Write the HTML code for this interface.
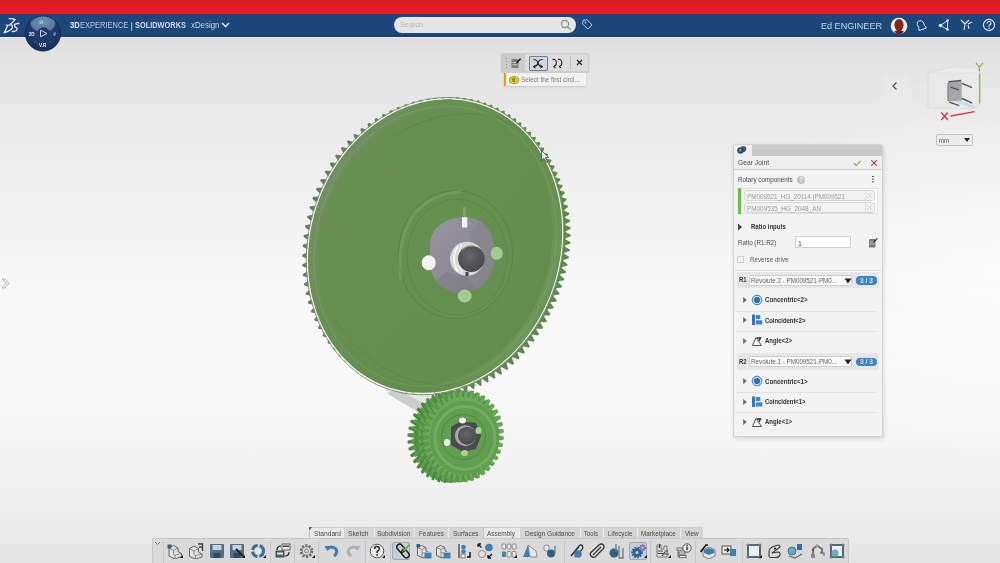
<!DOCTYPE html>
<html><head><meta charset="utf-8">
<style>
*{margin:0;padding:0;box-sizing:border-box}
html,body{width:1000px;height:563px;overflow:hidden}
body{font-family:"Liberation Sans",sans-serif;position:relative;background:linear-gradient(180deg,#c8202e 0,#e31d25 3px,#e31d25 14px,#1d477b 14px,#1d477b 37px,#e8e8e8 37px,#e4e4e4 563px)}
.abs{position:absolute}
#bgg{left:0;top:37px;width:1000px;height:526px;background:linear-gradient(180deg,#e6e8ea 0px,#dfdfdf 2px,#e3e3e3 20px,#e7e7e7 60px,#f0f0f0 150px,#f7f7f7 240px,#f9f9f9 330px,#f6f6f6 400px,#eeeeee 470px,#e4e4e4 526px)}
#redbar{left:0;top:0;width:1000px;height:14px;background:#e31d25;border-top:1px solid #c9232f}
#hdr{left:0;top:14px;width:1000px;height:22px;background:#1d477b;border-bottom:1px solid #143b68}
.brand{left:70px;top:20px;font-size:8.6px;line-height:10px;color:#d8e2ee;letter-spacing:-0.62px;white-space:nowrap}
.brand b{color:#e9eff6}
#search{left:394px;top:17px;width:182px;height:16px;border-radius:8px;background:#e6e6e6}
#search span{position:absolute;left:6px;top:4px;font-size:7px;color:#b8b8b8;line-height:8px}
.uname{left:821px;top:20px;font-size:9.8px;line-height:11px;color:#c3d3e6;letter-spacing:-0.45px;white-space:nowrap}
.t{position:absolute;white-space:nowrap;line-height:1}
</style></head><body><div id="wrap" style="position:absolute;left:0;top:0;width:1000px;height:563px;filter:blur(0.3px)">
<div id="bgg" class="abs"></div>
<div class="abs" style="left:600px;top:37px;width:400px;height:526px;background:radial-gradient(ellipse 260px 200px at 400px 230px,rgba(255,255,255,0.6),rgba(255,255,255,0))"></div>
<div id="redbar" class="abs"></div>
<div id="hdr" class="abs"></div>
<!-- 3DS logo -->
<svg class="abs" style="left:0;top:12px" width="24" height="26" viewBox="0 12 24 26">
<path d="M9.2 18.6 Q13 18.3 15 19.6 Q13 22 10.6 24" fill="none" stroke="#e6eef6" stroke-width="1.3" stroke-linecap="round"/>
<path d="M6.2 25.4 Q9 24.8 12 24.9" fill="none" stroke="#e6eef6" stroke-width="1.1" stroke-linecap="round"/>
<path d="M7.3 26.5 L4.4 32.5 Q8.5 31.5 11.4 29.2 Q12.6 27.8 12.3 26" fill="none" stroke="#e6eef6" stroke-width="1.3" stroke-linecap="round"/>
<path d="M18.9 23.5 Q15 23.4 14.2 25.2 Q14.5 27 16.8 28 Q18 29.5 15.5 31 Q13.8 31.7 12.3 31.4" fill="none" stroke="#e6eef6" stroke-width="1.3" stroke-linecap="round"/>
</svg>
<!-- compass -->
<svg class="abs" style="left:24px;top:14px" width="38" height="39" viewBox="0 0 38 39">
<defs><radialGradient id="cmp" cx="0.5" cy="0.35" r="0.65"><stop offset="0" stop-color="#25497a"/><stop offset="1" stop-color="#14305a"/></radialGradient>
<clipPath id="cc"><circle cx="19" cy="19.5" r="17"/></clipPath>
<radialGradient id="dome" cx="0.5" cy="0.4" r="0.6"><stop offset="0" stop-color="#6f8fb6"/><stop offset="0.8" stop-color="#5a7ba4"/><stop offset="1" stop-color="#4a6b96"/></radialGradient></defs>
<circle cx="19" cy="19.5" r="17.6" fill="url(#cmp)" stroke="#0f2a50" stroke-width="0.8"/>
<ellipse cx="19" cy="9.3" rx="12.3" ry="9" fill="url(#dome)" clip-path="url(#cc)"/>
<circle cx="19.5" cy="19.5" r="6.3" fill="#1b3a66"/>
<path d="M16.5 16.2 L23 19.5 L16.5 22.8 Z" fill="none" stroke="#c9d6e6" stroke-width="1"/>
<path d="M10 29 L12 27 M28 29 L26 27" stroke="#6d87a8" stroke-width="0.6"/>
<text x="4.8" y="22" font-size="4.6" fill="#e6edf5" font-weight="bold" font-family="Liberation Sans">3D</text>
<text x="15" y="33" font-size="4.6" fill="#e6edf5" font-weight="bold" font-family="Liberation Sans">V.R</text>
<text x="29.5" y="22" font-size="5" fill="#d8e2ee" font-family="Liberation Sans">i/</text>
<text x="15.5" y="9.5" font-size="4.6" fill="#e0e8f0" font-family="Liberation Sans">i/i</text>
</svg>
<svg class="abs" style="left:221px;top:22px" width="9" height="6" viewBox="0 0 9 6"><path d="M1 1 L4.5 4.5 L8 1" fill="none" stroke="#e6edf5" stroke-width="1.5"/></svg>
<div id="search" class="abs">
<svg style="position:absolute;left:166px;top:2px" width="12" height="12" viewBox="0 0 12 12"><circle cx="5" cy="5" r="3.6" fill="none" stroke="#8a8a8a" stroke-width="1.1"/><path d="M7.6 7.6 L10.5 10.5" stroke="#8a8a8a" stroke-width="1.3"/></svg>
</div>
<svg class="abs" style="left:581px;top:18px" width="12" height="13" viewBox="0 0 12 13"><path d="M2 2.5 L6 1.5 L11 7 L7 11 L1.5 6 Z" fill="none" stroke="#b3c9e2" stroke-width="1"/><circle cx="4.5" cy="4.5" r="0.9" fill="#b3c9e2"/></svg>
<svg class="abs" style="left:889px;top:16px" width="20" height="20" viewBox="0 0 20 20"><circle cx="10" cy="10" r="8.3" fill="#f4eeea"/><ellipse cx="10" cy="9" rx="4.6" ry="6" fill="#832818"/><path d="M5 15.5 Q10 12.5 15 15.5 Q13 18.2 10 18.2 Q7 18.2 5 15.5Z" fill="#6e2214"/></svg>
<svg class="abs" style="left:914px;top:18px" width="14" height="14" viewBox="0 0 14 14"><path d="M4.5 3 Q7.5 1.5 9.5 4.5 L10.5 7.5 L12.5 10 L5 12.5 L4.8 9.5 L3.2 6.5 Q2.8 4 4.5 3Z" fill="none" stroke="#dfe7f0" stroke-width="1"/></svg>
<svg class="abs" style="left:937px;top:18px" width="14" height="14" viewBox="0 0 14 14"><path d="M10.5 2.5 L3.5 7.5 L10.5 11.5 Z" fill="none" stroke="#dfe7f0" stroke-width="1"/><circle cx="3.5" cy="7.5" r="1.8" fill="#e2e9f1"/><circle cx="10.5" cy="2.5" r="1.3" fill="#e2e9f1"/><circle cx="10.5" cy="11.5" r="1.3" fill="#e2e9f1"/></svg>
<svg class="abs" style="left:959px;top:18px" width="14" height="14" viewBox="0 0 14 14"><path d="M2 2 L6 6 L5 12 M10 2 L6 6 M9 6 L13 4 M9 7 L10 11" fill="none" stroke="#e2e9f1" stroke-width="1.1"/></svg>
<svg class="abs" style="left:982px;top:18px" width="14" height="14" viewBox="0 0 14 14"><circle cx="7" cy="7" r="5.6" fill="none" stroke="#e2e9f1" stroke-width="1.1"/><path d="M5 5.5 Q5 3.5 7 3.5 Q9 3.5 9 5.3 Q9 6.5 7.2 7.3 L7 8.8" fill="none" stroke="#e2e9f1" stroke-width="1.1"/><circle cx="7" cy="10.5" r="0.7" fill="#e2e9f1"/></svg>
<svg class="abs" style="left:0;top:0" width="1000" height="563" viewBox="0 0 1000 563">
<defs>
<linearGradient id="gface" x1="0" y1="0" x2="1" y2="1">
<stop offset="0" stop-color="#6b9155"/><stop offset="0.45" stop-color="#678f50"/><stop offset="1" stop-color="#618b4c"/></linearGradient>
<linearGradient id="gteeth" x1="0" y1="0" x2="1" y2="0">
<stop offset="0" stop-color="#6c7866"/><stop offset="0.5" stop-color="#687f5e"/><stop offset="1" stop-color="#5c8a4b"/></linearGradient>
<linearGradient id="band" x1="0" y1="0.2" x2="1" y2="0.8">
<stop offset="0" stop-color="#768c6c" stop-opacity="0.9"/><stop offset="0.25" stop-color="#6f8f62" stop-opacity="0.3"/><stop offset="0.6" stop-color="#6f8f62" stop-opacity="0"/><stop offset="1" stop-color="#7fae6a" stop-opacity="0.5"/></linearGradient>
<linearGradient id="hubg" x1="0" y1="0" x2="1" y2="1">
<stop offset="0" stop-color="#9794a0"/><stop offset="0.6" stop-color="#8c8994"/><stop offset="1" stop-color="#7d7b84"/></linearGradient>
<radialGradient id="shaft" cx="0.45" cy="0.4" r="0.6"><stop offset="0" stop-color="#66656a"/><stop offset="1" stop-color="#4a494d"/></radialGradient>
</defs>
<path d="M382 384 L412 384 L432 396 L418 412 L388 394 Z" fill="#e6e6e6"/>
<path d="M388 394 L418 412 L425 404 L395 388Z" fill="#cdcdcd"/>
<path d="M482.4 435.8 L482.4 436.4 L488.5 437.7 L488.3 440.6 L482.1 441.3 L482.0 441.9 L481.9 442.5 L487.7 444.9 L487.1 447.7 L480.9 447.3 L480.7 447.9 L480.6 448.5 L485.9 451.9 L484.9 454.6 L478.9 453.1 L478.7 453.7 L478.4 454.2 L483.2 458.5 L481.9 461.1 L476.2 458.5 L475.9 459.0 L475.5 459.5 L479.6 464.6 L478.0 466.9 L472.7 463.3 L472.3 463.8 L472.0 464.2 L475.3 470.1 L473.3 472.0 L468.7 467.6 L468.2 467.9 L467.8 468.3 L470.2 474.7 L468.1 476.3 L464.1 471.0 L463.6 471.3 L463.1 471.6 L464.7 478.4 L462.3 479.6 L459.2 473.6 L458.6 473.8 L458.1 474.0 L458.7 481.0 L456.2 481.8 L453.9 475.3 L453.4 475.5 L452.9 475.6 L452.4 482.6 L449.9 482.9 L448.5 476.1 L448.0 476.2 L447.5 476.2 L446.1 483.1 L443.6 482.9 L443.1 475.9 L442.6 475.9 L442.1 475.8 L439.8 482.4 L437.3 481.8 L437.9 474.8 L437.4 474.6 L436.8 474.5 L433.7 480.6 L431.3 479.6 L432.9 472.7 L432.4 472.5 L431.9 472.2 L427.9 477.8 L425.8 476.3 L428.2 469.8 L427.8 469.4 L427.3 469.1 L422.7 473.9 L420.7 472.1 L424.0 466.0 L423.7 465.6 L423.3 465.2 L418.0 469.1 L416.4 467.0 L420.5 461.5 L420.1 461.1 L419.8 460.6 L414.1 463.6 L412.8 461.1 L417.6 456.5 L417.3 455.9 L417.1 455.4 L411.1 457.3 L410.1 454.7 L415.4 450.9 L415.3 450.3 L415.1 449.8 L408.9 450.6 L408.3 447.8 L414.1 445.0 L414.0 444.4 L413.9 443.8 L407.7 443.6 L407.5 440.7 L413.6 438.9 L413.6 438.3 L413.6 437.7 L407.5 436.4 L407.7 433.5 L413.9 432.8 L414.0 432.2 L414.1 431.6 L408.3 429.2 L408.9 426.4 L415.1 426.8 L415.3 426.2 L415.4 425.6 L410.1 422.2 L411.1 419.5 L417.1 421.0 L417.3 420.4 L417.6 419.9 L412.8 415.6 L414.1 413.0 L419.8 415.6 L420.1 415.1 L420.5 414.6 L416.4 409.5 L418.0 407.2 L423.3 410.8 L423.7 410.3 L424.0 409.9 L420.7 404.0 L422.7 402.1 L427.3 406.5 L427.8 406.2 L428.2 405.8 L425.8 399.4 L427.9 397.8 L431.9 403.1 L432.4 402.8 L432.9 402.5 L431.3 395.7 L433.7 394.5 L436.8 400.5 L437.4 400.3 L437.9 400.1 L437.3 393.1 L439.8 392.3 L442.1 398.8 L442.6 398.6 L443.1 398.5 L443.6 391.5 L446.1 391.2 L447.5 398.0 L448.0 397.9 L448.5 397.9 L449.9 391.0 L452.4 391.2 L452.9 398.2 L453.4 398.2 L453.9 398.3 L456.2 391.7 L458.7 392.3 L458.1 399.3 L458.6 399.5 L459.2 399.6 L462.3 393.5 L464.7 394.5 L463.1 401.4 L463.6 401.6 L464.1 401.9 L468.1 396.3 L470.2 397.8 L467.8 404.3 L468.2 404.7 L468.7 405.0 L473.3 400.2 L475.3 402.0 L472.0 408.1 L472.3 408.5 L472.7 408.9 L478.0 405.0 L479.6 407.1 L475.5 412.6 L475.9 413.0 L476.2 413.5 L481.9 410.5 L483.2 413.0 L478.4 417.6 L478.7 418.2 L478.9 418.7 L484.9 416.8 L485.9 419.4 L480.6 423.2 L480.7 423.8 L480.9 424.3 L487.1 423.5 L487.7 426.3 L481.9 429.1 L482.0 429.7 L482.1 430.3 L488.3 430.5 L488.5 433.4 L482.4 435.2Z" fill="#4d883f"/><path d="M485.9 435.5 L485.9 436.1 L492.0 437.5 L491.8 440.4 L485.6 441.1 L485.5 441.7 L485.4 442.3 L491.2 444.7 L490.6 447.5 L484.4 447.1 L484.2 447.7 L484.1 448.3 L489.4 451.7 L488.4 454.4 L482.4 452.9 L482.2 453.4 L481.9 454.0 L486.7 458.3 L485.4 460.8 L479.7 458.2 L479.4 458.8 L479.0 459.3 L483.1 464.4 L481.5 466.7 L476.2 463.1 L475.8 463.6 L475.5 464.0 L478.8 469.8 L476.8 471.8 L472.2 467.3 L471.7 467.7 L471.3 468.1 L473.7 474.4 L471.6 476.0 L467.6 470.8 L467.1 471.1 L466.6 471.4 L468.2 478.1 L465.8 479.3 L462.7 473.4 L462.1 473.6 L461.6 473.8 L462.2 480.8 L459.7 481.5 L457.4 475.1 L456.9 475.2 L456.4 475.3 L455.9 482.4 L453.4 482.7 L452.0 475.9 L451.5 475.9 L451.0 475.9 L449.6 482.8 L447.1 482.7 L446.6 475.7 L446.1 475.6 L445.6 475.5 L443.3 482.2 L440.8 481.6 L441.4 474.6 L440.9 474.4 L440.3 474.2 L437.2 480.4 L434.8 479.3 L436.4 472.5 L435.9 472.2 L435.4 472.0 L431.4 477.5 L429.3 476.1 L431.7 469.5 L431.3 469.2 L430.8 468.8 L426.2 473.6 L424.2 471.8 L427.5 465.8 L427.2 465.4 L426.8 464.9 L421.5 468.9 L419.9 466.7 L424.0 461.3 L423.6 460.8 L423.3 460.3 L417.6 463.3 L416.3 460.9 L421.1 456.2 L420.8 455.7 L420.6 455.2 L414.6 457.1 L413.6 454.5 L418.9 450.7 L418.8 450.1 L418.6 449.5 L412.4 450.4 L411.8 447.6 L417.6 444.8 L417.5 444.2 L417.4 443.6 L411.2 443.3 L411.0 440.5 L417.1 438.7 L417.1 438.1 L417.1 437.5 L411.0 436.1 L411.2 433.2 L417.4 432.6 L417.5 431.9 L417.6 431.3 L411.8 428.9 L412.4 426.1 L418.6 426.5 L418.8 425.9 L418.9 425.3 L413.6 421.9 L414.6 419.2 L420.6 420.7 L420.8 420.2 L421.1 419.6 L416.3 415.3 L417.6 412.8 L423.3 415.4 L423.6 414.9 L424.0 414.3 L419.9 409.2 L421.5 407.0 L426.8 410.5 L427.2 410.1 L427.5 409.6 L424.2 403.8 L426.2 401.8 L430.8 406.3 L431.3 405.9 L431.7 405.5 L429.3 399.2 L431.4 397.6 L435.4 402.8 L435.9 402.5 L436.4 402.3 L434.8 395.5 L437.2 394.3 L440.3 400.2 L440.9 400.0 L441.4 399.8 L440.8 392.8 L443.3 392.1 L445.6 398.5 L446.1 398.4 L446.6 398.3 L447.1 391.2 L449.6 390.9 L451.0 397.7 L451.5 397.7 L452.0 397.7 L453.4 390.8 L455.9 390.9 L456.4 397.9 L456.9 398.0 L457.4 398.1 L459.7 391.5 L462.2 392.0 L461.6 399.1 L462.1 399.2 L462.7 399.4 L465.8 393.2 L468.2 394.3 L466.6 401.1 L467.1 401.4 L467.6 401.7 L471.6 396.1 L473.7 397.5 L471.3 404.1 L471.7 404.4 L472.2 404.8 L476.8 400.0 L478.8 401.8 L475.5 407.8 L475.8 408.3 L476.2 408.7 L481.5 404.7 L483.1 406.9 L479.0 412.3 L479.4 412.8 L479.7 413.3 L485.4 410.3 L486.7 412.7 L481.9 417.4 L482.2 417.9 L482.4 418.5 L488.4 416.5 L489.4 419.1 L484.1 422.9 L484.2 423.5 L484.4 424.1 L490.6 423.2 L491.2 426.0 L485.4 428.8 L485.5 429.4 L485.6 430.0 L491.8 430.3 L492.0 433.1 L485.9 434.9Z" fill="#5b9a4b"/><path d="M489.4 435.3 L489.4 435.9 L495.5 437.2 L495.3 440.1 L489.1 440.8 L489.0 441.4 L488.9 442.0 L494.7 444.4 L494.1 447.3 L487.9 446.8 L487.7 447.4 L487.6 448.0 L492.9 451.4 L491.9 454.1 L485.9 452.6 L485.7 453.2 L485.4 453.7 L490.2 458.0 L488.9 460.6 L483.2 458.0 L482.9 458.5 L482.5 459.0 L486.6 464.2 L485.0 466.4 L479.7 462.9 L479.3 463.3 L479.0 463.8 L482.3 469.6 L480.3 471.5 L475.7 467.1 L475.2 467.4 L474.8 467.8 L477.2 474.2 L475.1 475.8 L471.1 470.5 L470.6 470.8 L470.1 471.1 L471.7 477.9 L469.3 479.1 L466.2 473.1 L465.6 473.4 L465.1 473.6 L465.7 480.5 L463.2 481.3 L460.9 474.9 L460.4 475.0 L459.9 475.1 L459.4 482.1 L456.9 482.4 L455.5 475.6 L455.0 475.7 L454.5 475.7 L453.1 482.6 L450.6 482.4 L450.1 475.4 L449.6 475.4 L449.1 475.3 L446.8 481.9 L444.3 481.3 L444.9 474.3 L444.4 474.1 L443.8 474.0 L440.7 480.1 L438.3 479.1 L439.9 472.2 L439.4 472.0 L438.9 471.7 L434.9 477.3 L432.8 475.8 L435.2 469.3 L434.8 468.9 L434.3 468.6 L429.7 473.4 L427.7 471.6 L431.0 465.5 L430.7 465.1 L430.3 464.7 L425.0 468.6 L423.4 466.5 L427.5 461.1 L427.1 460.6 L426.8 460.1 L421.1 463.1 L419.8 460.7 L424.6 456.0 L424.3 455.4 L424.1 454.9 L418.1 456.9 L417.1 454.2 L422.4 450.4 L422.3 449.9 L422.1 449.3 L415.9 450.1 L415.3 447.4 L421.1 444.5 L421.0 443.9 L420.9 443.3 L414.7 443.1 L414.5 440.2 L420.6 438.4 L420.6 437.8 L420.6 437.2 L414.5 435.9 L414.7 433.0 L420.9 432.3 L421.0 431.7 L421.1 431.1 L415.3 428.7 L415.9 425.9 L422.1 426.3 L422.3 425.7 L422.4 425.1 L417.1 421.7 L418.1 419.0 L424.1 420.5 L424.3 419.9 L424.6 419.4 L419.8 415.1 L421.1 412.6 L426.8 415.1 L427.1 414.6 L427.5 414.1 L423.4 409.0 L425.0 406.7 L430.3 410.3 L430.7 409.8 L431.0 409.4 L427.7 403.5 L429.7 401.6 L434.3 406.1 L434.8 405.7 L435.2 405.3 L432.8 398.9 L434.9 397.3 L438.9 402.6 L439.4 402.3 L439.9 402.0 L438.3 395.3 L440.7 394.1 L443.8 400.0 L444.4 399.8 L444.9 399.6 L444.3 392.6 L446.8 391.8 L449.1 398.3 L449.6 398.1 L450.1 398.0 L450.6 391.0 L453.1 390.7 L454.5 397.5 L455.0 397.5 L455.5 397.4 L456.9 390.5 L459.4 390.7 L459.9 397.7 L460.4 397.7 L460.9 397.8 L463.2 391.2 L465.7 391.8 L465.1 398.8 L465.6 399.0 L466.2 399.2 L469.3 393.0 L471.7 394.0 L470.1 400.9 L470.6 401.1 L471.1 401.4 L475.1 395.9 L477.2 397.3 L474.8 403.8 L475.2 404.2 L475.7 404.5 L480.3 399.7 L482.3 401.5 L479.0 407.6 L479.3 408.0 L479.7 408.4 L485.0 404.5 L486.6 406.6 L482.5 412.1 L482.9 412.5 L483.2 413.0 L488.9 410.1 L490.2 412.5 L485.4 417.1 L485.7 417.7 L485.9 418.2 L491.9 416.3 L492.9 418.9 L487.6 422.7 L487.7 423.3 L487.9 423.8 L494.1 423.0 L494.7 425.8 L488.9 428.6 L489.0 429.2 L489.1 429.8 L495.3 430.0 L495.5 432.9 L489.4 434.7Z" fill="#4f8c41"/><path d="M492.9 435.0 L492.9 435.7 L499.0 437.0 L498.8 439.9 L492.6 440.6 L492.5 441.2 L492.4 441.8 L498.2 444.2 L497.6 447.0 L491.4 446.6 L491.2 447.2 L491.1 447.8 L496.4 451.2 L495.4 453.9 L489.4 452.4 L489.2 452.9 L488.9 453.5 L493.7 457.8 L492.4 460.3 L486.7 457.8 L486.4 458.3 L486.0 458.8 L490.1 463.9 L488.5 466.2 L483.2 462.6 L482.8 463.1 L482.5 463.5 L485.8 469.3 L483.8 471.3 L479.2 466.8 L478.7 467.2 L478.3 467.6 L480.7 473.9 L478.6 475.5 L474.6 470.3 L474.1 470.6 L473.6 470.9 L475.2 477.6 L472.8 478.8 L469.7 472.9 L469.1 473.1 L468.6 473.3 L469.2 480.3 L466.7 481.1 L464.4 474.6 L463.9 474.7 L463.4 474.8 L462.9 481.9 L460.4 482.2 L459.0 475.4 L458.5 475.4 L458.0 475.4 L456.6 482.3 L454.1 482.2 L453.6 475.2 L453.1 475.1 L452.6 475.1 L450.3 481.7 L447.8 481.1 L448.4 474.1 L447.9 473.9 L447.3 473.7 L444.2 479.9 L441.8 478.9 L443.4 472.0 L442.9 471.7 L442.4 471.5 L438.4 477.0 L436.3 475.6 L438.7 469.0 L438.3 468.7 L437.8 468.3 L433.2 473.2 L431.2 471.3 L434.5 465.3 L434.2 464.9 L433.8 464.4 L428.5 468.4 L426.9 466.2 L431.0 460.8 L430.6 460.3 L430.3 459.8 L424.6 462.8 L423.3 460.4 L428.1 455.7 L427.8 455.2 L427.6 454.7 L421.6 456.6 L420.6 454.0 L425.9 450.2 L425.8 449.6 L425.6 449.0 L419.4 449.9 L418.8 447.1 L424.6 444.3 L424.5 443.7 L424.4 443.1 L418.2 442.9 L418.0 440.0 L424.1 438.2 L424.1 437.6 L424.1 437.0 L418.0 435.6 L418.2 432.8 L424.4 432.1 L424.5 431.5 L424.6 430.8 L418.8 428.5 L419.4 425.6 L425.6 426.0 L425.8 425.4 L425.9 424.9 L420.6 421.5 L421.6 418.8 L427.6 420.3 L427.8 419.7 L428.1 419.1 L423.3 414.8 L424.6 412.3 L430.3 414.9 L430.6 414.4 L431.0 413.9 L426.9 408.7 L428.5 406.5 L433.8 410.0 L434.2 409.6 L434.5 409.1 L431.2 403.3 L433.2 401.4 L437.8 405.8 L438.3 405.4 L438.7 405.1 L436.3 398.7 L438.4 397.1 L442.4 402.4 L442.9 402.1 L443.4 401.8 L441.8 395.0 L444.2 393.8 L447.3 399.7 L447.9 399.5 L448.4 399.3 L447.8 392.3 L450.3 391.6 L452.6 398.0 L453.1 397.9 L453.6 397.8 L454.1 390.8 L456.6 390.4 L458.0 397.2 L458.5 397.2 L459.0 397.2 L460.4 390.3 L462.9 390.4 L463.4 397.4 L463.9 397.5 L464.4 397.6 L466.7 391.0 L469.2 391.5 L468.6 398.6 L469.1 398.7 L469.7 398.9 L472.8 392.8 L475.2 393.8 L473.6 400.6 L474.1 400.9 L474.6 401.2 L478.6 395.6 L480.7 397.0 L478.3 403.6 L478.7 403.9 L479.2 404.3 L483.8 399.5 L485.8 401.3 L482.5 407.3 L482.8 407.8 L483.2 408.2 L488.5 404.2 L490.1 406.4 L486.0 411.8 L486.4 412.3 L486.7 412.8 L492.4 409.8 L493.7 412.2 L488.9 416.9 L489.2 417.4 L489.4 418.0 L495.4 416.0 L496.4 418.7 L491.1 422.4 L491.2 423.0 L491.4 423.6 L497.6 422.7 L498.2 425.5 L492.4 428.3 L492.5 428.9 L492.6 429.5 L498.8 429.8 L499.0 432.6 L492.9 434.4Z" fill="#63a253"/><path d="M495.9 434.8 L495.9 435.4 L502.0 436.8 L501.8 439.7 L495.6 440.4 L495.5 441.0 L495.4 441.6 L501.2 444.0 L500.6 446.8 L494.4 446.4 L494.2 447.0 L494.1 447.6 L499.4 451.0 L498.4 453.7 L492.4 452.2 L492.2 452.7 L491.9 453.3 L496.7 457.6 L495.4 460.1 L489.7 457.5 L489.4 458.1 L489.0 458.6 L493.1 463.7 L491.5 466.0 L486.2 462.4 L485.8 462.9 L485.5 463.3 L488.8 469.1 L486.8 471.1 L482.2 466.6 L481.7 467.0 L481.3 467.4 L483.7 473.7 L481.6 475.3 L477.6 470.1 L477.1 470.4 L476.6 470.7 L478.2 477.4 L475.8 478.6 L472.7 472.7 L472.1 472.9 L471.6 473.1 L472.2 480.1 L469.7 480.8 L467.4 474.4 L466.9 474.5 L466.4 474.6 L465.9 481.7 L463.4 482.0 L462.0 475.2 L461.5 475.2 L461.0 475.2 L459.6 482.1 L457.1 482.0 L456.6 475.0 L456.1 474.9 L455.6 474.8 L453.3 481.5 L450.8 480.9 L451.4 473.9 L450.9 473.7 L450.3 473.5 L447.2 479.7 L444.8 478.6 L446.4 471.8 L445.9 471.5 L445.4 471.3 L441.4 476.8 L439.3 475.4 L441.7 468.8 L441.3 468.5 L440.8 468.1 L436.2 472.9 L434.2 471.1 L437.5 465.1 L437.2 464.7 L436.8 464.2 L431.5 468.2 L429.9 466.0 L434.0 460.6 L433.6 460.1 L433.3 459.6 L427.6 462.6 L426.3 460.2 L431.1 455.5 L430.8 455.0 L430.6 454.5 L424.6 456.4 L423.6 453.8 L428.9 450.0 L428.8 449.4 L428.6 448.8 L422.4 449.7 L421.8 446.9 L427.6 444.1 L427.5 443.5 L427.4 442.9 L421.2 442.6 L421.0 439.8 L427.1 438.0 L427.1 437.4 L427.1 436.8 L421.0 435.4 L421.2 432.5 L427.4 431.9 L427.5 431.2 L427.6 430.6 L421.8 428.2 L422.4 425.4 L428.6 425.8 L428.8 425.2 L428.9 424.6 L423.6 421.2 L424.6 418.5 L430.6 420.0 L430.8 419.5 L431.1 418.9 L426.3 414.6 L427.6 412.1 L433.3 414.7 L433.6 414.2 L434.0 413.6 L429.9 408.5 L431.5 406.3 L436.8 409.8 L437.2 409.4 L437.5 408.9 L434.2 403.1 L436.2 401.1 L440.8 405.6 L441.3 405.2 L441.7 404.8 L439.3 398.5 L441.4 396.9 L445.4 402.1 L445.9 401.8 L446.4 401.6 L444.8 394.8 L447.2 393.6 L450.3 399.5 L450.9 399.3 L451.4 399.1 L450.8 392.1 L453.3 391.4 L455.6 397.8 L456.1 397.7 L456.6 397.6 L457.1 390.5 L459.6 390.2 L461.0 397.0 L461.5 397.0 L462.0 397.0 L463.4 390.1 L465.9 390.2 L466.4 397.2 L466.9 397.3 L467.4 397.4 L469.7 390.8 L472.2 391.3 L471.6 398.4 L472.1 398.5 L472.7 398.7 L475.8 392.5 L478.2 393.6 L476.6 400.4 L477.1 400.7 L477.6 401.0 L481.6 395.4 L483.7 396.8 L481.3 403.4 L481.7 403.7 L482.2 404.1 L486.8 399.3 L488.8 401.1 L485.5 407.1 L485.8 407.6 L486.2 408.0 L491.5 404.0 L493.1 406.2 L489.0 411.6 L489.4 412.1 L489.7 412.6 L495.4 409.6 L496.7 412.0 L491.9 416.7 L492.2 417.2 L492.4 417.8 L498.4 415.8 L499.4 418.4 L494.1 422.2 L494.2 422.8 L494.4 423.4 L500.6 422.5 L501.2 425.3 L495.4 428.1 L495.5 428.7 L495.6 429.3 L501.8 429.6 L502.0 432.4 L495.9 434.2Z" fill="#54923f"/>
<path d="M497.4 434.7 L497.4 435.3 L503.5 436.7 L503.3 439.6 L497.1 440.2 L497.0 440.9 L496.9 441.5 L502.7 443.9 L502.1 446.7 L495.9 446.3 L495.7 446.9 L495.6 447.5 L500.9 450.9 L499.9 453.6 L493.9 452.1 L493.7 452.6 L493.4 453.2 L498.2 457.5 L496.9 460.0 L491.2 457.4 L490.9 458.0 L490.5 458.5 L494.6 463.6 L493.0 465.8 L487.7 462.3 L487.3 462.7 L487.0 463.2 L490.3 469.0 L488.3 471.0 L483.7 466.5 L483.2 466.9 L482.8 467.3 L485.2 473.6 L483.1 475.2 L479.1 470.0 L478.6 470.3 L478.1 470.6 L479.7 477.3 L477.3 478.5 L474.2 472.6 L473.6 472.8 L473.1 473.0 L473.7 480.0 L471.2 480.7 L468.9 474.3 L468.4 474.4 L467.9 474.5 L467.4 481.6 L464.9 481.9 L463.5 475.1 L463.0 475.1 L462.5 475.1 L461.1 482.0 L458.6 481.9 L458.1 474.9 L457.6 474.8 L457.1 474.7 L454.8 481.3 L452.3 480.8 L452.9 473.7 L452.4 473.6 L451.8 473.4 L448.7 479.6 L446.3 478.5 L447.9 471.7 L447.4 471.4 L446.9 471.2 L442.9 476.7 L440.8 475.3 L443.2 468.7 L442.8 468.4 L442.3 468.0 L437.7 472.8 L435.7 471.0 L439.0 465.0 L438.7 464.5 L438.3 464.1 L433.0 468.1 L431.4 465.9 L435.5 460.5 L435.1 460.0 L434.8 459.5 L429.1 462.5 L427.8 460.1 L432.6 455.4 L432.3 454.9 L432.1 454.3 L426.1 456.3 L425.1 453.7 L430.4 449.9 L430.3 449.3 L430.1 448.7 L423.9 449.6 L423.3 446.8 L429.1 444.0 L429.0 443.4 L428.9 442.8 L422.7 442.5 L422.5 439.7 L428.6 437.9 L428.6 437.3 L428.6 436.7 L422.5 435.3 L422.7 432.4 L428.9 431.8 L429.0 431.1 L429.1 430.5 L423.3 428.1 L423.9 425.3 L430.1 425.7 L430.3 425.1 L430.4 424.5 L425.1 421.1 L426.1 418.4 L432.1 419.9 L432.3 419.4 L432.6 418.8 L427.8 414.5 L429.1 412.0 L434.8 414.6 L435.1 414.0 L435.5 413.5 L431.4 408.4 L433.0 406.2 L438.3 409.7 L438.7 409.3 L439.0 408.8 L435.7 403.0 L437.7 401.0 L442.3 405.5 L442.8 405.1 L443.2 404.7 L440.8 398.4 L442.9 396.8 L446.9 402.0 L447.4 401.7 L447.9 401.4 L446.3 394.7 L448.7 393.5 L451.8 399.4 L452.4 399.2 L452.9 399.0 L452.3 392.0 L454.8 391.3 L457.1 397.7 L457.6 397.6 L458.1 397.5 L458.6 390.4 L461.1 390.1 L462.5 396.9 L463.0 396.9 L463.5 396.9 L464.9 390.0 L467.4 390.1 L467.9 397.1 L468.4 397.2 L468.9 397.3 L471.2 390.7 L473.7 391.2 L473.1 398.3 L473.6 398.4 L474.2 398.6 L477.3 392.4 L479.7 393.5 L478.1 400.3 L478.6 400.6 L479.1 400.8 L483.1 395.3 L485.2 396.7 L482.8 403.3 L483.2 403.6 L483.7 404.0 L488.3 399.2 L490.3 401.0 L487.0 407.0 L487.3 407.5 L487.7 407.9 L493.0 403.9 L494.6 406.1 L490.5 411.5 L490.9 412.0 L491.2 412.5 L496.9 409.5 L498.2 411.9 L493.4 416.6 L493.7 417.1 L493.9 417.7 L499.9 415.7 L500.9 418.3 L495.6 422.1 L495.7 422.7 L495.9 423.3 L502.1 422.4 L502.7 425.2 L496.9 428.0 L497.0 428.6 L497.1 429.2 L503.3 429.5 L503.5 432.3 L497.4 434.1Z" fill="#6aa85a" stroke="#4f8f40" stroke-width="0.5"/>
<ellipse cx="464.5" cy="438" rx="35" ry="37" fill="#619e4f"/>
<ellipse cx="465" cy="438" rx="30" ry="31.5" fill="none" stroke="#78b166" stroke-width="3" opacity="0.75"/>
<ellipse cx="463.5" cy="437" rx="22" ry="22.5" fill="none" stroke="#4c8c3e" stroke-width="1"/>
<path d="M451 427 L461 421 L476 423 L481 436 L476 449 L463 452 L451 445 Z" fill="#4a4a4f"/>
<circle cx="465.4" cy="435.7" r="10.5" fill="#a9a9a9"/>
<circle cx="467" cy="435.7" r="9" fill="url(#shaft)"/>
<ellipse cx="462.5" cy="420.5" rx="3.5" ry="3" fill="#f2f2f2"/>
<ellipse cx="478.5" cy="430.5" rx="3" ry="3.5" fill="#a9d295"/>
<ellipse cx="447" cy="442.5" rx="3" ry="3.5" fill="#f2f2f2"/>
<ellipse cx="464.5" cy="453" rx="3.5" ry="3" fill="#a9d295"/>
<path d="M565.7 231.8 L565.7 232.3 L570.8 234.7 L570.8 236.2 L565.6 238.3 L565.5 238.9 L565.5 239.5 L570.5 242.1 L570.4 243.5 L565.1 245.5 L565.1 246.1 L565.0 246.7 L569.8 249.4 L569.7 250.9 L564.4 252.7 L564.3 253.3 L564.3 253.8 L568.9 256.8 L568.7 258.3 L563.4 259.9 L563.3 260.4 L563.2 261.0 L567.6 264.2 L567.4 265.6 L562.1 267.0 L562.0 267.6 L561.8 268.2 L566.1 271.5 L565.7 273.0 L560.5 274.1 L560.3 274.7 L560.2 275.3 L564.2 278.8 L563.8 280.2 L558.6 281.2 L558.4 281.8 L558.2 282.4 L562.1 286.0 L561.6 287.5 L556.4 288.3 L556.2 288.8 L556.0 289.4 L559.6 293.2 L559.1 294.6 L553.9 295.2 L553.7 295.8 L553.4 296.3 L556.8 300.3 L556.2 301.7 L551.1 302.1 L550.8 302.6 L550.6 303.2 L553.8 307.2 L553.1 308.6 L548.0 308.9 L547.7 309.4 L547.5 309.9 L550.5 314.1 L549.8 315.5 L544.6 315.5 L544.3 316.0 L544.0 316.6 L546.9 320.9 L546.2 322.3 L540.9 322.0 L540.6 322.5 L540.3 323.0 L543.1 327.6 L542.3 328.9 L536.9 328.4 L536.6 328.9 L536.2 329.4 L539.0 334.1 L538.1 335.4 L532.6 334.5 L532.3 335.0 L531.9 335.5 L534.5 340.5 L533.6 341.7 L528.1 340.5 L527.7 341.0 L527.3 341.5 L529.8 346.6 L528.9 347.8 L523.3 346.3 L522.9 346.8 L522.5 347.2 L524.8 352.6 L523.8 353.7 L518.2 351.9 L517.8 352.3 L517.4 352.8 L519.5 358.3 L518.5 359.4 L512.9 357.2 L512.4 357.6 L512.0 358.0 L514.0 363.8 L512.8 364.8 L507.3 362.3 L506.8 362.7 L506.4 363.1 L508.2 369.0 L507.0 370.0 L501.4 367.1 L501.0 367.4 L500.5 367.8 L502.0 373.8 L500.7 374.7 L495.3 371.4 L494.8 371.8 L494.3 372.1 L495.4 378.0 L494.1 378.8 L489.0 375.5 L488.4 375.8 L487.9 376.1 L488.6 381.9 L487.2 382.6 L482.4 379.1 L481.9 379.4 L481.3 379.7 L481.6 385.4 L480.2 386.1 L475.7 382.4 L475.1 382.7 L474.6 382.9 L474.5 388.5 L473.1 389.1 L468.8 385.3 L468.2 385.5 L467.7 385.7 L467.1 390.9 L465.6 391.3 L461.7 387.5 L461.1 387.7 L460.5 387.8 L459.6 392.6 L458.1 392.9 L454.5 389.3 L453.9 389.4 L453.3 389.5 L452.0 393.9 L450.5 394.1 L447.2 390.6 L446.6 390.7 L446.0 390.7 L444.4 394.6 L442.9 394.7 L439.9 391.4 L439.3 391.5 L438.7 391.5 L436.8 394.9 L435.3 394.9 L432.6 391.9 L432.0 392.0 L431.4 392.0 L429.3 395.1 L427.8 395.1 L425.3 392.4 L424.7 392.4 L424.1 392.4 L421.8 394.9 L420.3 394.9 L418.0 392.3 L417.4 392.3 L416.8 392.2 L414.3 394.3 L412.8 394.1 L410.7 391.7 L410.1 391.7 L409.5 391.6 L406.9 393.1 L405.5 392.8 L403.4 390.7 L402.8 390.5 L402.3 390.4 L399.6 391.5 L398.2 391.1 L396.2 389.1 L395.6 388.9 L395.1 388.8 L392.4 389.5 L390.9 389.0 L389.1 387.0 L388.5 386.8 L388.0 386.6 L385.3 387.0 L383.8 386.4 L382.1 384.3 L381.5 384.1 L381.0 383.9 L378.3 383.9 L376.9 383.2 L375.2 381.2 L374.7 380.9 L374.1 380.6 L371.5 380.4 L370.1 379.6 L368.5 377.5 L368.0 377.2 L367.5 376.9 L364.8 376.5 L363.4 375.7 L362.1 373.3 L361.5 373.0 L361.0 372.6 L358.2 372.2 L356.9 371.3 L355.8 368.6 L355.3 368.2 L354.8 367.8 L351.9 367.4 L350.7 366.3 L349.9 363.4 L349.4 363.0 L348.9 362.5 L345.9 362.0 L344.7 360.9 L344.2 357.8 L343.8 357.3 L343.3 356.8 L339.9 356.4 L338.7 355.2 L338.9 351.6 L338.4 351.1 L338.0 350.6 L334.0 350.3 L332.9 349.1 L333.9 345.0 L333.5 344.5 L333.1 343.9 L328.5 343.8 L327.5 342.4 L329.3 338.0 L328.9 337.5 L328.6 336.9 L323.4 336.7 L322.4 335.2 L325.1 330.6 L324.8 330.0 L324.5 329.4 L318.8 329.1 L318.0 327.5 L321.3 322.9 L321.0 322.2 L320.8 321.6 L314.9 321.0 L314.2 319.3 L318.0 314.8 L317.8 314.1 L317.5 313.5 L311.4 312.5 L310.8 310.8 L315.2 306.4 L315.0 305.7 L314.8 305.0 L308.4 303.8 L307.9 302.0 L312.8 297.7 L312.6 297.0 L312.5 296.3 L306.1 294.7 L305.7 292.9 L311.0 288.8 L310.8 288.1 L310.7 287.4 L304.3 285.4 L304.0 283.5 L309.6 279.8 L309.5 279.0 L309.4 278.3 L303.1 275.9 L302.9 274.0 L308.8 270.5 L308.7 269.8 L308.7 269.0 L302.4 266.3 L302.4 264.3 L308.5 261.2 L308.5 260.4 L308.5 259.7 L302.3 256.6 L302.4 254.6 L308.7 251.8 L308.7 251.1 L308.8 250.3 L302.7 246.8 L302.9 244.8 L309.4 242.4 L309.5 241.6 L309.6 240.9 L303.6 237.0 L303.9 235.1 L310.7 233.0 L310.8 232.2 L311.0 231.5 L305.0 227.3 L305.4 225.3 L312.5 223.7 L312.7 222.9 L312.8 222.2 L307.0 217.6 L307.4 215.7 L314.8 214.4 L315.0 213.7 L315.2 213.0 L309.4 208.1 L310.0 206.2 L317.5 205.4 L317.8 204.6 L318.0 203.9 L312.4 198.7 L313.1 196.8 L320.8 196.5 L321.1 195.8 L321.3 195.1 L316.0 189.5 L316.8 187.7 L324.5 187.8 L324.8 187.1 L325.1 186.5 L320.2 180.7 L321.0 179.0 L328.6 179.4 L329.0 178.8 L329.3 178.1 L324.7 172.1 L325.7 170.5 L333.1 171.3 L333.5 170.7 L333.9 170.1 L329.7 163.9 L330.8 162.3 L338.1 163.5 L338.5 162.9 L338.9 162.3 L335.1 156.1 L336.2 154.5 L343.4 156.1 L343.8 155.6 L344.3 155.0 L340.9 148.6 L342.1 147.1 L349.0 149.1 L349.5 148.6 L349.9 148.0 L347.0 141.5 L348.2 140.2 L354.9 142.5 L355.4 142.0 L355.9 141.5 L353.5 135.1 L354.9 133.9 L361.1 136.3 L361.7 135.8 L362.2 135.4 L360.4 129.2 L361.8 128.1 L367.6 130.6 L368.1 130.1 L368.7 129.7 L367.5 123.8 L368.9 122.8 L374.3 125.3 L374.8 124.9 L375.4 124.5 L374.7 118.9 L376.2 118.0 L381.1 120.5 L381.7 120.2 L382.2 119.8 L382.1 114.6 L383.6 113.8 L388.1 116.2 L388.7 115.9 L389.3 115.6 L389.6 110.8 L391.1 110.1 L395.2 112.4 L395.8 112.1 L396.4 111.9 L397.1 107.3 L398.6 106.7 L402.5 109.1 L403.0 108.9 L403.6 108.7 L404.7 104.4 L406.2 103.9 L409.7 106.3 L410.3 106.1 L410.9 105.9 L412.2 102.0 L413.8 101.6 L417.0 104.0 L417.6 103.9 L418.2 103.7 L419.8 100.1 L421.3 99.8 L424.4 102.3 L424.9 102.1 L425.5 102.0 L427.4 98.8 L428.9 98.5 L431.7 101.0 L432.2 100.9 L432.8 100.8 L434.8 97.9 L436.3 97.8 L438.9 100.1 L439.5 100.1 L440.1 100.1 L442.2 97.3 L443.7 97.2 L446.1 99.7 L446.6 99.7 L447.2 99.6 L449.5 97.0 L451.0 97.0 L453.2 99.6 L453.7 99.7 L454.3 99.7 L456.8 97.1 L458.2 97.2 L460.2 100.1 L460.7 100.1 L461.3 100.2 L463.9 97.7 L465.3 97.9 L467.1 101.0 L467.6 101.1 L468.1 101.2 L470.9 98.8 L472.3 99.0 L473.8 102.3 L474.3 102.4 L474.9 102.5 L477.8 100.3 L479.2 100.6 L480.4 104.0 L480.9 104.2 L481.5 104.4 L484.5 102.2 L485.9 102.7 L486.8 106.2 L487.3 106.4 L487.9 106.6 L491.1 104.6 L492.3 105.2 L493.1 108.8 L493.6 109.0 L494.1 109.2 L497.4 107.4 L498.6 108.1 L499.1 111.7 L499.6 112.0 L500.0 112.3 L503.5 110.6 L504.7 111.3 L504.9 115.1 L505.4 115.3 L505.8 115.6 L509.4 114.2 L510.5 115.0 L510.5 118.7 L510.9 119.0 L511.4 119.3 L515.0 118.1 L516.1 118.9 L515.9 122.7 L516.3 123.0 L516.7 123.4 L520.4 122.3 L521.4 123.2 L521.0 127.0 L521.4 127.3 L521.8 127.7 L525.5 126.9 L526.5 127.8 L525.8 131.6 L526.2 131.9 L526.6 132.3 L530.4 131.7 L531.3 132.7 L530.4 136.4 L530.8 136.8 L531.1 137.2 L535.0 136.8 L535.9 137.8 L534.8 141.5 L535.1 141.9 L535.5 142.3 L539.4 142.1 L540.3 143.2 L538.9 146.8 L539.2 147.2 L539.5 147.7 L543.5 147.6 L544.3 148.8 L542.7 152.3 L543.0 152.8 L543.3 153.2 L547.3 153.4 L548.1 154.6 L546.3 158.1 L546.6 158.5 L546.8 159.0 L550.9 159.4 L551.5 160.6 L549.6 164.0 L549.8 164.5 L550.1 165.0 L554.1 165.5 L554.7 166.8 L552.5 170.2 L552.8 170.7 L553.0 171.2 L557.1 171.9 L557.7 173.1 L555.3 176.5 L555.5 177.0 L555.7 177.5 L559.9 178.4 L560.4 179.7 L557.7 182.9 L557.9 183.4 L558.0 183.9 L562.3 185.0 L562.8 186.3 L559.8 189.5 L560.0 190.0 L560.1 190.6 L564.4 191.8 L564.8 193.2 L561.6 196.2 L561.8 196.7 L561.9 197.3 L566.3 198.7 L566.6 200.1 L563.2 203.0 L563.3 203.6 L563.4 204.1 L567.8 205.7 L568.1 207.1 L564.3 210.0 L564.3 210.5 L564.4 211.1 L569.1 212.8 L569.3 214.3 L565.0 217.0 L565.1 217.6 L565.1 218.1 L570.0 220.1 L570.2 221.5 L565.5 224.1 L565.5 224.6 L565.6 225.2 L570.6 227.3 L570.7 228.8 L565.7 231.2Z" fill="url(#gteeth)"/>
<path d="M563.8 231.6 L563.7 237.4 L563.4 243.3 L562.9 249.1 L562.2 254.9 L561.4 260.8 L560.3 266.5 L559.0 272.3 L557.5 278.0 L555.9 283.7 L554.0 289.3 L552.0 294.9 L549.8 300.3 L547.4 305.7 L544.9 311.0 L542.1 316.2 L539.2 321.3 L536.2 326.3 L533.0 331.1 L529.6 335.9 L526.1 340.4 L522.5 344.9 L518.7 349.2 L514.8 353.3 L510.8 357.3 L506.6 361.0 L502.4 364.6 L498.0 368.1 L493.5 371.3 L489.0 374.4 L484.3 377.2 L479.6 379.9 L474.9 382.3 L470.0 384.5 L465.1 386.5 L460.2 388.3 L455.2 389.9 L450.2 391.3 L445.2 392.4 L440.1 393.3 L435.1 394.0 L430.0 394.5 L425.0 394.7 L419.9 394.7 L414.9 394.5 L410.0 394.0 L405.0 393.3 L400.1 392.4 L395.3 391.2 L390.5 389.9 L385.8 388.3 L381.2 386.5 L376.6 384.5 L372.2 382.2 L367.8 379.8 L363.6 377.1 L359.4 374.3 L355.4 371.2 L351.5 368.0 L347.7 364.5 L344.0 360.9 L340.5 357.1 L337.2 353.2 L334.0 349.0 L330.9 344.8 L328.0 340.3 L325.3 335.7 L322.7 331.0 L320.4 326.2 L318.2 321.2 L316.1 316.1 L314.3 310.9 L312.6 305.6 L311.2 300.2 L309.9 294.7 L308.8 289.2 L307.9 283.5 L307.2 277.9 L306.7 272.1 L306.4 266.4 L306.3 260.6 L306.4 254.8 L306.7 248.9 L307.2 243.1 L307.9 237.3 L308.8 231.4 L309.9 225.7 L311.2 219.9 L312.6 214.2 L314.3 208.5 L316.1 202.9 L318.2 197.3 L320.4 191.9 L322.7 186.5 L325.3 181.2 L328.0 176.0 L330.9 170.9 L334.0 165.9 L337.2 161.1 L340.5 156.3 L344.0 151.8 L347.7 147.3 L351.5 143.0 L355.4 138.9 L359.4 134.9 L363.6 131.2 L367.8 127.6 L372.2 124.1 L376.6 120.9 L381.2 117.8 L385.8 115.0 L390.5 112.3 L395.3 109.9 L400.1 107.7 L405.0 105.7 L410.0 103.9 L414.9 102.3 L419.9 100.9 L425.0 99.8 L430.0 98.9 L435.1 98.2 L440.1 97.7 L445.2 97.5 L450.2 97.5 L455.2 97.7 L460.2 98.2 L465.1 98.9 L470.0 99.8 L474.9 101.0 L479.6 102.3 L484.3 103.9 L489.0 105.7 L493.5 107.7 L498.0 110.0 L502.4 112.4 L506.6 115.1 L510.8 117.9 L514.8 121.0 L518.7 124.2 L522.5 127.7 L526.1 131.3 L529.6 135.1 L533.0 139.0 L536.2 143.2 L539.2 147.4 L542.1 151.9 L544.9 156.5 L547.4 161.2 L549.8 166.0 L552.0 171.0 L554.0 176.1 L555.9 181.3 L557.5 186.6 L559.0 192.0 L560.3 197.5 L561.4 203.0 L562.2 208.7 L562.9 214.3 L563.4 220.1 L563.7 225.8Z" fill="none" stroke="#7f9276" stroke-width="1"/>
<path d="M562.7 231.8 L562.6 237.5 L562.3 243.3 L561.8 249.1 L561.1 254.9 L560.2 260.6 L559.2 266.4 L557.9 272.1 L556.4 277.8 L554.8 283.4 L553.0 288.9 L551.0 294.4 L548.8 299.9 L546.4 305.2 L543.9 310.5 L541.2 315.6 L538.3 320.7 L535.3 325.6 L532.1 330.4 L528.8 335.1 L525.3 339.6 L521.7 344.0 L517.9 348.2 L514.1 352.3 L510.1 356.3 L506.0 360.0 L501.8 363.6 L497.4 367.0 L493.0 370.2 L488.5 373.2 L483.9 376.0 L479.2 378.7 L474.5 381.1 L469.7 383.3 L464.9 385.3 L460.0 387.1 L455.0 388.6 L450.1 390.0 L445.1 391.1 L440.1 392.0 L435.1 392.7 L430.1 393.1 L425.1 393.4 L420.1 393.4 L415.1 393.1 L410.2 392.7 L405.3 392.0 L400.4 391.1 L395.6 389.9 L390.9 388.6 L386.2 387.0 L381.7 385.2 L377.2 383.2 L372.7 381.0 L368.4 378.6 L364.2 376.0 L360.1 373.1 L356.1 370.1 L352.2 366.9 L348.5 363.5 L344.9 359.9 L341.4 356.1 L338.1 352.2 L334.9 348.1 L331.8 343.9 L329.0 339.5 L326.3 334.9 L323.7 330.2 L321.4 325.4 L319.2 320.5 L317.2 315.5 L315.4 310.3 L313.7 305.0 L312.3 299.7 L311.0 294.3 L309.9 288.8 L309.1 283.2 L308.4 277.6 L307.9 271.9 L307.6 266.2 L307.5 260.4 L307.6 254.7 L307.9 248.9 L308.4 243.1 L309.1 237.3 L309.9 231.6 L311.0 225.8 L312.3 220.1 L313.7 214.4 L315.4 208.8 L317.2 203.3 L319.2 197.8 L321.4 192.3 L323.7 187.0 L326.3 181.7 L329.0 176.6 L331.8 171.5 L334.9 166.6 L338.1 161.8 L341.4 157.1 L344.9 152.6 L348.5 148.2 L352.2 144.0 L356.1 139.9 L360.1 135.9 L364.2 132.2 L368.4 128.6 L372.7 125.2 L377.2 122.0 L381.7 119.0 L386.2 116.2 L390.9 113.5 L395.6 111.1 L400.4 108.9 L405.3 106.9 L410.2 105.1 L415.1 103.6 L420.1 102.2 L425.1 101.1 L430.1 100.2 L435.1 99.5 L440.1 99.1 L445.1 98.8 L450.1 98.8 L455.0 99.1 L460.0 99.5 L464.9 100.2 L469.7 101.1 L474.5 102.3 L479.2 103.6 L483.9 105.2 L488.5 107.0 L493.0 109.0 L497.4 111.2 L501.8 113.6 L506.0 116.2 L510.1 119.1 L514.1 122.1 L517.9 125.3 L521.7 128.7 L525.3 132.3 L528.8 136.1 L532.1 140.0 L535.3 144.1 L538.3 148.3 L541.2 152.7 L543.9 157.3 L546.4 162.0 L548.8 166.8 L551.0 171.7 L553.0 176.7 L554.8 181.9 L556.4 187.2 L557.9 192.5 L559.2 197.9 L560.2 203.4 L561.1 209.0 L561.8 214.6 L562.3 220.3 L562.6 226.0Z" fill="url(#gface)"/>
<path d="M556.9 232.4 L556.8 237.9 L556.6 243.4 L556.1 248.9 L555.4 254.5 L554.6 260.0 L553.6 265.5 L552.4 270.9 L551.0 276.3 L549.4 281.7 L547.7 287.0 L545.7 292.3 L543.7 297.4 L541.4 302.5 L539.0 307.6 L536.4 312.5 L533.7 317.3 L530.8 322.0 L527.7 326.6 L524.6 331.1 L521.2 335.4 L517.8 339.6 L514.2 343.7 L510.5 347.6 L506.7 351.3 L502.8 354.9 L498.8 358.3 L494.6 361.5 L490.4 364.6 L486.1 367.5 L481.7 370.2 L477.3 372.7 L472.7 375.0 L468.2 377.1 L463.5 379.0 L458.9 380.7 L454.1 382.2 L449.4 383.5 L444.6 384.6 L439.9 385.4 L435.1 386.1 L430.3 386.5 L425.5 386.7 L420.8 386.7 L416.0 386.5 L411.3 386.1 L406.6 385.4 L402.0 384.6 L397.4 383.5 L392.9 382.2 L388.4 380.7 L384.1 379.0 L379.8 377.1 L375.5 374.9 L371.4 372.6 L367.4 370.1 L363.5 367.4 L359.6 364.5 L355.9 361.5 L352.4 358.2 L348.9 354.8 L345.6 351.2 L342.4 347.4 L339.4 343.5 L336.5 339.5 L333.8 335.3 L331.2 330.9 L328.8 326.5 L326.5 321.9 L324.4 317.2 L322.5 312.3 L320.8 307.4 L319.2 302.4 L317.8 297.3 L316.6 292.1 L315.6 286.9 L314.7 281.5 L314.1 276.2 L313.6 270.7 L313.3 265.3 L313.2 259.8 L313.3 254.3 L313.6 248.8 L314.1 243.3 L314.7 237.7 L315.6 232.2 L316.6 226.7 L317.8 221.3 L319.2 215.9 L320.8 210.5 L322.5 205.2 L324.4 199.9 L326.5 194.8 L328.8 189.7 L331.2 184.6 L333.8 179.7 L336.5 174.9 L339.4 170.2 L342.4 165.6 L345.6 161.1 L348.9 156.8 L352.4 152.6 L355.9 148.5 L359.6 144.6 L363.5 140.9 L367.4 137.3 L371.4 133.9 L375.5 130.7 L379.8 127.6 L384.1 124.7 L388.4 122.0 L392.9 119.5 L397.4 117.2 L402.0 115.1 L406.6 113.2 L411.3 111.5 L416.0 110.0 L420.8 108.7 L425.5 107.6 L430.3 106.8 L435.1 106.1 L439.9 105.7 L444.6 105.5 L449.4 105.5 L454.1 105.7 L458.9 106.1 L463.5 106.8 L468.2 107.6 L472.7 108.7 L477.3 110.0 L481.7 111.5 L486.1 113.2 L490.4 115.1 L494.6 117.3 L498.8 119.6 L502.8 122.1 L506.7 124.8 L510.5 127.7 L514.2 130.7 L517.8 134.0 L521.2 137.4 L524.6 141.0 L527.7 144.8 L530.8 148.7 L533.7 152.7 L536.4 156.9 L539.0 161.3 L541.4 165.7 L543.7 170.3 L545.7 175.0 L547.7 179.9 L549.4 184.8 L551.0 189.8 L552.4 194.9 L553.6 200.1 L554.6 205.3 L555.4 210.7 L556.1 216.0 L556.6 221.5 L556.8 226.9Z" fill="none" stroke="url(#band)" stroke-width="9"/>
<path d="M562.7 231.8 L562.6 237.5 L562.3 243.3 L561.8 249.1 L561.1 254.9 L560.2 260.6 L559.2 266.4 L557.9 272.1 L556.4 277.8 L554.8 283.4 L553.0 288.9 L551.0 294.4 L548.8 299.9 L546.4 305.2 L543.9 310.5 L541.2 315.6 L538.3 320.7 L535.3 325.6 L532.1 330.4 L528.8 335.1 L525.3 339.6 L521.7 344.0 L517.9 348.2 L514.1 352.3 L510.1 356.3 L506.0 360.0 L501.8 363.6 L497.4 367.0 L493.0 370.2 L488.5 373.2 L483.9 376.0 L479.2 378.7 L474.5 381.1 L469.7 383.3 L464.9 385.3 L460.0 387.1 L455.0 388.6 L450.1 390.0 L445.1 391.1 L440.1 392.0 L435.1 392.7 L430.1 393.1 L425.1 393.4 L420.1 393.4 L415.1 393.1 L410.2 392.7 L405.3 392.0 L400.4 391.1 L395.6 389.9 L390.9 388.6 L386.2 387.0 L381.7 385.2 L377.2 383.2 L372.7 381.0 L368.4 378.6 L364.2 376.0 L360.1 373.1 L356.1 370.1 L352.2 366.9 L348.5 363.5 L344.9 359.9 L341.4 356.1 L338.1 352.2 L334.9 348.1 L331.8 343.9 L329.0 339.5 L326.3 334.9 L323.7 330.2 L321.4 325.4 L319.2 320.5 L317.2 315.5 L315.4 310.3 L313.7 305.0 L312.3 299.7 L311.0 294.3 L309.9 288.8 L309.1 283.2 L308.4 277.6 L307.9 271.9 L307.6 266.2 L307.5 260.4 L307.6 254.7 L307.9 248.9 L308.4 243.1 L309.1 237.3 L309.9 231.6 L311.0 225.8 L312.3 220.1 L313.7 214.4 L315.4 208.8 L317.2 203.3 L319.2 197.8 L321.4 192.3 L323.7 187.0 L326.3 181.7 L329.0 176.6 L331.8 171.5 L334.9 166.6 L338.1 161.8 L341.4 157.1 L344.9 152.6 L348.5 148.2 L352.2 144.0 L356.1 139.9 L360.1 135.9 L364.2 132.2 L368.4 128.6 L372.7 125.2 L377.2 122.0 L381.7 119.0 L386.2 116.2 L390.9 113.5 L395.6 111.1 L400.4 108.9 L405.3 106.9 L410.2 105.1 L415.1 103.6 L420.1 102.2 L425.1 101.1 L430.1 100.2 L435.1 99.5 L440.1 99.1 L445.1 98.8 L450.1 98.8 L455.0 99.1 L460.0 99.5 L464.9 100.2 L469.7 101.1 L474.5 102.3 L479.2 103.6 L483.9 105.2 L488.5 107.0 L493.0 109.0 L497.4 111.2 L501.8 113.6 L506.0 116.2 L510.1 119.1 L514.1 122.1 L517.9 125.3 L521.7 128.7 L525.3 132.3 L528.8 136.1 L532.1 140.0 L535.3 144.1 L538.3 148.3 L541.2 152.7 L543.9 157.3 L546.4 162.0 L548.8 166.8 L551.0 171.7 L553.0 176.7 L554.8 181.9 L556.4 187.2 L557.9 192.5 L559.2 197.9 L560.2 203.4 L561.1 209.0 L561.8 214.6 L562.3 220.3 L562.6 226.0Z" fill="none" stroke="#f3f8f0" stroke-width="1.1"/>
<path d="M556.3 232.5 L556.2 237.9 L555.9 243.4 L555.5 248.9 L554.8 254.4 L554.0 259.9 L553.0 265.4 L551.7 270.8 L550.4 276.2 L548.8 281.5 L547.1 286.8 L545.2 292.0 L543.1 297.2 L540.8 302.3 L538.4 307.2 L535.9 312.1 L533.1 316.9 L530.3 321.6 L527.3 326.2 L524.1 330.6 L520.8 334.9 L517.4 339.1 L513.8 343.1 L510.1 347.0 L506.3 350.8 L502.4 354.3 L498.4 357.7 L494.3 360.9 L490.1 364.0 L485.8 366.9 L481.5 369.5 L477.0 372.0 L472.5 374.3 L468.0 376.4 L463.4 378.3 L458.7 380.0 L454.0 381.5 L449.3 382.8 L444.6 383.9 L439.8 384.7 L435.1 385.4 L430.3 385.8 L425.6 386.0 L420.8 386.0 L416.1 385.8 L411.4 385.3 L406.8 384.7 L402.2 383.8 L397.6 382.8 L393.1 381.5 L388.7 380.0 L384.3 378.3 L380.0 376.4 L375.8 374.3 L371.7 372.0 L367.7 369.5 L363.8 366.8 L360.0 363.9 L356.4 360.8 L352.8 357.6 L349.4 354.2 L346.1 350.6 L342.9 346.9 L339.9 343.0 L337.0 339.0 L334.3 334.8 L331.7 330.5 L329.3 326.0 L327.1 321.5 L325.0 316.8 L323.1 312.0 L321.4 307.1 L319.8 302.1 L318.4 297.0 L317.2 291.9 L316.2 286.6 L315.4 281.3 L314.7 276.0 L314.2 270.6 L314.0 265.2 L313.9 259.7 L314.0 254.3 L314.2 248.8 L314.7 243.3 L315.4 237.8 L316.2 232.3 L317.2 226.8 L318.4 221.4 L319.8 216.0 L321.4 210.7 L323.1 205.4 L325.0 200.2 L327.1 195.0 L329.3 189.9 L331.7 185.0 L334.3 180.1 L337.0 175.3 L339.9 170.6 L342.9 166.0 L346.1 161.6 L349.4 157.3 L352.8 153.1 L356.4 149.1 L360.0 145.2 L363.8 141.4 L367.7 137.9 L371.7 134.5 L375.8 131.3 L380.0 128.2 L384.3 125.3 L388.7 122.7 L393.1 120.2 L397.6 117.9 L402.2 115.8 L406.8 113.9 L411.4 112.2 L416.1 110.7 L420.8 109.4 L425.6 108.3 L430.3 107.5 L435.1 106.8 L439.8 106.4 L444.6 106.2 L449.3 106.2 L454.0 106.4 L458.7 106.9 L463.4 107.5 L468.0 108.4 L472.5 109.4 L477.0 110.7 L481.5 112.2 L485.8 113.9 L490.1 115.8 L494.3 117.9 L498.4 120.2 L502.4 122.7 L506.3 125.4 L510.1 128.3 L513.8 131.4 L517.4 134.6 L520.8 138.0 L524.1 141.6 L527.3 145.3 L530.3 149.2 L533.1 153.2 L535.9 157.4 L538.4 161.7 L540.8 166.2 L543.1 170.7 L545.2 175.4 L547.1 180.2 L548.8 185.1 L550.4 190.1 L551.7 195.2 L553.0 200.3 L554.0 205.6 L554.8 210.9 L555.5 216.2 L555.9 221.6 L556.2 227.0Z" fill="none" stroke="#86b472" stroke-width="0.6" opacity="0.6"/>
<path d="M392 137 Q440 108 486 114.7 Q520 122 538 149" fill="none" stroke="#4e8640" stroke-width="0.8" opacity="0.7"/>
<path d="M335 321 Q370 370 420 382 Q450 388 477 385" fill="none" stroke="#4e8640" stroke-width="0.8" opacity="0.7"/>
<ellipse cx="455.5" cy="254.7" rx="57.3" ry="64" fill="#65904f" stroke="#55823f" stroke-width="0.8"/>
<path d="M401 280 Q396 240 414 214 Q432 193 462 191.5" fill="none" stroke="#86b172" stroke-width="3" opacity="0.35"/>
<ellipse cx="457" cy="257" rx="50" ry="58" fill="none" stroke="#55823f" stroke-width="0.7" opacity="0.8"/>
<path d="M430 241 Q433 229 441 224 Q450 218 461 217 Q472 217 480 221 Q490 229 493 240 Q496 252 494 264 Q491 277 482 286 Q472 293 458 293.5 Q444 291 436 281 Q430 272 430 262 Z" fill="url(#hubg)"/>
<path d="M480 221 Q490 229 493 240 Q496 252 494 264 Q491 277 482 286 L472 268 L470 232Z" fill="#86838b" opacity="0.6"/>
<path d="M436 281 Q444 291 458 293.5 Q470 293 476 289 L466 276 L446 272 Z" fill="#7d7b83" opacity="0.6"/>
<circle cx="467" cy="258.7" r="17" fill="#d8d8d8"/>
<path d="M458 246 Q450 258 458 272" fill="none" stroke="#fafafa" stroke-width="1.6"/>
<path d="M462 244 Q455 258 462 273" fill="none" stroke="#f4f4f4" stroke-width="1.2"/>
<circle cx="471.3" cy="258.7" r="13.3" fill="url(#shaft)"/>
<path d="M462 250 Q468 244 478 247" fill="none" stroke="#e8b0a8" stroke-width="0.8" opacity="0.7"/>
<rect x="465.5" y="272" width="3" height="4" fill="#454449"/>
<ellipse cx="428.7" cy="262.7" rx="7" ry="7.5" fill="#f3f3f3"/>
<ellipse cx="496.7" cy="253.3" rx="6" ry="6.5" fill="#a5c994"/>
<ellipse cx="464.7" cy="296" rx="7" ry="6.5" fill="#a5c994"/>
<rect x="462" y="217.3" width="5.3" height="10.2" fill="#f2f2f2"/>
<rect x="463" y="207" width="3" height="10" fill="#8ab577" opacity="0.5"/>
<!-- cursor -->
<path d="M541.5 150.5 L541.5 160.5 L544 158.3 L546 162.3 L547.5 161.6 L545.5 157.7 L548.8 157.5 Z" fill="#e8e8e8" stroke="#333" stroke-width="0.7"/>
</svg><!-- left chevron -->
<svg class="abs" style="left:0;top:277px" width="12" height="13" viewBox="0 277 12 13"><path d="M2 279 L5 279 L9 283.5 L5 288 L2 288 L6 283.5 Z" fill="#f2f2f2" stroke="#b2b2b2" stroke-width="0.9" stroke-linejoin="round"/></svg>
<!-- top command toolbar -->
<div class="abs" style="left:500.5px;top:53px;width:88px;height:18.5px;background:#dddddd;border:1px solid #cdcdcd;border-radius:2px;box-shadow:0 1px 2px rgba(0,0,0,0.12)"></div>
<div class="abs" style="left:501px;top:54px;width:24px;height:17px;background:#cbcbcb"></div>
<div class="abs" style="left:505.5px;top:57.5px;width:1px;height:1px;background:#8a8a8a;box-shadow:0 3px 0 #8a8a8a,0 6px 0 #8a8a8a,0 9px 0 #8a8a8a"></div>
<svg class="abs" style="left:510px;top:57px" width="12" height="12" viewBox="0 0 12 12"><rect x="1.5" y="2" width="7" height="9" rx="0.8" fill="#7d7d7d"/><rect x="2.5" y="5" width="5" height="0.9" fill="#d5d5d5"/><rect x="2.5" y="7.3" width="5" height="0.9" fill="#d5d5d5"/><path d="M6 5.5 L10 1.2 L11.2 2.2 L7 6.5Z" fill="#1e1e1e"/></svg>
<div class="abs" style="left:528.5px;top:55.5px;width:19px;height:15px;background:#cdd6e0;border:1px solid #6f7e8d;border-radius:1px"></div>
<svg class="abs" style="left:532px;top:57px" width="12" height="12" viewBox="0 0 12 12"><path d="M1.5 2.5 Q5 2.5 6 6 Q7 9.5 10 9.5" fill="none" stroke="#262626" stroke-width="1.1"/><path d="M1.5 9.5 Q5 9.5 6 6 Q7 2.5 10.5 2.5" fill="none" stroke="#262626" stroke-width="1.1"/><path d="M8.5 8 L10.8 9.8 L8.2 11" fill="none" stroke="#262626" stroke-width="1"/><path d="M3.2 8 L1.2 9.8 L3.6 11" fill="none" stroke="#262626" stroke-width="1"/></svg>
<svg class="abs" style="left:551px;top:57px" width="13" height="12" viewBox="0 0 13 12"><path d="M1.5 2.5 Q5 1.8 5.3 5.5 Q5.5 8.5 3 9.5" fill="none" stroke="#262626" stroke-width="1.1"/><path d="M7 2.5 Q10.5 1.8 10.8 5.5 Q11 8.5 8.5 9.5" fill="none" stroke="#262626" stroke-width="1.1"/><path d="M4.5 8 L2.5 9.8 L4.8 11" fill="none" stroke="#262626" stroke-width="1"/><path d="M10 8 L8 9.8 L10.3 11" fill="none" stroke="#262626" stroke-width="1"/></svg>
<div class="abs" style="left:569.5px;top:56px;width:1px;height:13px;background:#c0c0c0"></div>
<svg class="abs" style="left:576px;top:59px" width="7" height="7" viewBox="0 0 7 7"><path d="M1 1 L6 6 M6 1 L1 6" stroke="#2a2a2a" stroke-width="1.2"/></svg>
<!-- message -->
<div class="abs" style="left:503.5px;top:72.5px;width:82px;height:13px;background:#f1f1f1;box-shadow:0 1px 2px rgba(0,0,0,0.15)"></div>
<div class="abs" style="left:503.5px;top:72.5px;width:2.2px;height:13px;background:#e79a1c"></div>
<div class="abs" style="left:508.5px;top:75.5px;width:10.5px;height:8px;border-radius:50%;background:#e8cf2a;border:0.8px solid #b39a10"></div>
<!-- nav arrow + view cube -->
<div class="abs" style="left:883px;top:75px;width:25px;height:22px;background:#ebebeb;border-radius:3px;opacity:0.35"></div>
<svg class="abs" style="left:891px;top:81px" width="8" height="10" viewBox="0 0 8 10"><path d="M5.5 1.5 L2 5 L5.5 8.5" fill="none" stroke="#555" stroke-width="1.3"/></svg>
<svg class="abs" style="left:924px;top:58px" width="64" height="66" viewBox="924 58 64 66">
<path d="M928 72.4 L952.3 66.8 L976 67.4 L980 72.4 L980 104 L974.7 108.5 L928 107.9 Z" fill="#e9e9e9" stroke="#d3d3d3" stroke-width="0.6"/>
<path d="M928 72.4 L953 74 L980 72.4 M953 74 L953 108" fill="none" stroke="#dedede" stroke-width="0.5"/>
<path d="M948 81.5 L961.7 80.5 L961.7 101 L948 101.5Z" fill="#a6a6aa"/>
<path d="M948.6 81.7 L961 80.5" stroke="#5c5c5f" stroke-width="1.6"/>
<path d="M951 87.3 L958.6 89.8 M962.3 83.6 L971.6 87.3 M962.3 98.5 L971.6 102.9 M949.9 102.3 L958.6 105.4" stroke="#545457" stroke-width="1.4" stroke-linecap="round"/>
<path d="M948 83 L948 101" stroke="#6a6a6d" stroke-width="1"/>
<path d="M956 101.6 L974.7 107.9 M958 100.5 L974 106.5" stroke="#b7d9ec" stroke-width="1.1"/>
<path d="M979.6 73.7 L979.6 103.5" stroke="#8bbf3f" stroke-width="1.4"/>
<path d="M976 63 L979.4 67.2 L982.8 63 M979.4 67.2 L979.4 71.2" fill="none" stroke="#8bbf3f" stroke-width="1.3"/>
<path d="M950.5 116 L974.7 111.6" stroke="#d9354a" stroke-width="1.4"/>
<path d="M941.3 112.5 L947.7 120 M947.7 112.5 L941.3 120" stroke="#d9354a" stroke-width="1.4"/>
</svg>
<div class="abs" style="left:935.8px;top:133.6px;width:37px;height:12px;background:#ececec;border:1px solid #c4c4c4;border-radius:2px"></div>
<svg class="abs" style="left:963px;top:137px" width="8" height="6" viewBox="0 0 8 6"><path d="M1 1 L7 1 L4 5 Z" fill="#222"/></svg>
<!-- panel -->
<div class="abs" style="left:732.5px;top:143.5px;width:150px;height:293px;background:#f3f3f3;border:1px solid #d2d2d2;border-radius:3px 3px 0 0;box-shadow:1px 2px 4px rgba(0,0,0,0.13)"></div>
<div class="abs" style="left:752px;top:144.5px;width:129.5px;height:11.5px;background:#c9c9c9;border-radius:0 2px 0 0"></div>
<div class="abs" style="left:733.5px;top:144.5px;width:18.5px;height:11.5px;background:#f0f0f0"></div>
<svg class="abs" style="left:736px;top:145px" width="12" height="10" viewBox="0 0 12 10"><circle cx="7.3" cy="4" r="3" fill="#4a5866"/><circle cx="4.5" cy="5.5" r="3.3" fill="#2f4d66"/><circle cx="4.2" cy="5.2" r="1.2" fill="#7d95aa"/></svg>
<div class="abs" style="left:733.5px;top:156px;width:148px;height:13.5px;background:#efefef;border-bottom:1px solid #cdcdcd"></div>
<svg class="abs" style="left:852.5px;top:159px" width="9" height="8" viewBox="0 0 9 8"><path d="M1 4.2 L3.3 6.3 L7.8 1.8" fill="none" stroke="#7cb844" stroke-width="1.2"/></svg>
<svg class="abs" style="left:869.5px;top:158.7px" width="8" height="8" viewBox="0 0 8 8"><path d="M1.2 1.2 L6.8 6.8 M6.8 1.2 L1.2 6.8" stroke="#d63a40" stroke-width="1.2"/></svg>
<div class="abs" style="left:797px;top:176px;width:8px;height:8px;border-radius:50%;background:#c2c2c2"></div>
<div class="abs" style="left:872.3px;top:176px;width:1.4px;height:1.4px;background:#555;box-shadow:0 2.6px 0 #555,0 5.2px 0 #555"></div>
<div class="abs" style="left:737.5px;top:188.3px;width:140px;height:25.7px;background:#fdfdfd;border:1px solid #e0e0e0;border-left:none"></div>
<div class="abs" style="left:737.5px;top:188.3px;width:3.3px;height:25.7px;background:#6cbd48"></div>
<div class="abs" style="left:743.6px;top:190.2px;width:131px;height:10.6px;background:#f3f3f3;border:1px solid #d4d4d4;border-radius:3px"></div>
<div class="abs" style="left:743.6px;top:202.3px;width:131px;height:10.6px;background:#f3f3f3;border:1px solid #d4d4d4;border-radius:3px"></div>
<div class="abs" style="left:864.5px;top:191px;width:1px;height:9px;background:#dcdcdc"></div>
<div class="abs" style="left:864.5px;top:203px;width:1px;height:9px;background:#dcdcdc"></div>
<svg class="abs" style="left:866px;top:192px" width="7" height="7" viewBox="0 0 7 7"><path d="M1 1 L6 6 M6 1 L1 6" stroke="#c8c8c8" stroke-width="0.9"/></svg>
<svg class="abs" style="left:866px;top:204px" width="7" height="7" viewBox="0 0 7 7"><path d="M1 1 L6 6 M6 1 L1 6" stroke="#c8c8c8" stroke-width="0.9"/></svg>
<svg class="abs" style="left:737px;top:222.5px" width="6" height="8" viewBox="0 0 6 8"><path d="M1 0.5 L5 4 L1 7.5Z" fill="#444"/></svg>
<div class="abs" style="left:794.8px;top:236.3px;width:56.5px;height:12px;background:#fff;border:1px solid #cfcfcf;border-radius:1px"></div>
<svg class="abs" style="left:867.5px;top:237px" width="10" height="11" viewBox="0 0 10 11"><rect x="1" y="2" width="6.5" height="8.5" rx="0.8" fill="#7a7a7a"/><rect x="2" y="4.5" width="4.5" height="0.8" fill="#d0d0d0"/><rect x="2" y="6.5" width="4.5" height="0.8" fill="#d0d0d0"/><path d="M5 5 L9 1 L9.8 1.8 L5.8 5.8Z" fill="#222"/></svg>
<div class="abs" style="left:737.2px;top:255.5px;width:7.2px;height:7.2px;background:#f6f6f6;border:1px solid #c9c9c9;border-radius:1px"></div>
<div class="abs" style="left:735px;top:269.5px;width:146px;height:1px;background:#e0e0e0"></div>
<!-- R1 -->
<div class="abs" style="left:736.5px;top:271.8px;width:142px;height:16.5px;background:#e7e7e7"></div>
<div class="abs" style="left:748.6px;top:274.5px;width:103.5px;height:11.5px;background:#fafafa;border:1px solid #cdcdcd;border-radius:1px"></div>
<svg class="abs" style="left:843.5px;top:277.5px" width="8" height="6" viewBox="0 0 8 6"><path d="M0.5 0.5 L7.5 0.5 L4 5.5Z" fill="#222"/></svg>
<div class="abs" style="left:855.6px;top:276.4px;width:21px;height:8.2px;background:#3c82c4;border-radius:4.1px"></div>
<!-- R2 -->
<div class="abs" style="left:736.5px;top:353px;width:142px;height:16.5px;background:#e7e7e7"></div>
<div class="abs" style="left:748.6px;top:355.7px;width:103.5px;height:11.5px;background:#fafafa;border:1px solid #cdcdcd;border-radius:1px"></div>
<svg class="abs" style="left:843.5px;top:358.7px" width="8" height="6" viewBox="0 0 8 6"><path d="M0.5 0.5 L7.5 0.5 L4 5.5Z" fill="#222"/></svg>
<div class="abs" style="left:855.6px;top:357.6px;width:21px;height:8.2px;background:#3c82c4;border-radius:4.1px"></div>
<svg class="abs" style="left:742px;top:296.0px" width="6" height="8" viewBox="0 0 6 8"><path d="M1.2 1 L4.8 4 L1.2 7Z" fill="#6a6a6a"/></svg>
<svg class="abs" style="left:751px;top:294.0px" width="12" height="12" viewBox="0 0 12 12"><circle cx="6" cy="6" r="4.8" fill="#cfe0f0" stroke="#3a7cc0" stroke-width="1"/><circle cx="6" cy="6" r="3.1" fill="#2f6fb3"/></svg>
<svg class="abs" style="left:742px;top:316.4px" width="6" height="8" viewBox="0 0 6 8"><path d="M1.2 1 L4.8 4 L1.2 7Z" fill="#6a6a6a"/></svg>
<svg class="abs" style="left:751px;top:314.4px" width="12" height="12" viewBox="0 0 12 12"><rect x="1" y="0.5" width="3" height="10.5" fill="#3477b8"/><rect x="4.8" y="1" width="4.5" height="4" fill="#3f86c8"/><rect x="4.8" y="6.3" width="6.5" height="4.2" fill="#3f86c8"/></svg>
<svg class="abs" style="left:742px;top:336.6px" width="6" height="8" viewBox="0 0 6 8"><path d="M1.2 1 L4.8 4 L1.2 7Z" fill="#6a6a6a"/></svg>
<svg class="abs" style="left:751px;top:334.6px" width="12" height="12" viewBox="0 0 12 12"><path d="M1.5 10.5 L5 2.5 L10.5 10.5Z" fill="none" stroke="#444" stroke-width="0.9"/><path d="M6 3 L9.5 3 L8 6" fill="none" stroke="#222" stroke-width="1.3"/></svg>
<svg class="abs" style="left:742px;top:377.4px" width="6" height="8" viewBox="0 0 6 8"><path d="M1.2 1 L4.8 4 L1.2 7Z" fill="#6a6a6a"/></svg>
<svg class="abs" style="left:751px;top:375.4px" width="12" height="12" viewBox="0 0 12 12"><circle cx="6" cy="6" r="4.8" fill="#cfe0f0" stroke="#3a7cc0" stroke-width="1"/><circle cx="6" cy="6" r="3.1" fill="#2f6fb3"/></svg>
<svg class="abs" style="left:742px;top:397.7px" width="6" height="8" viewBox="0 0 6 8"><path d="M1.2 1 L4.8 4 L1.2 7Z" fill="#6a6a6a"/></svg>
<svg class="abs" style="left:751px;top:395.7px" width="12" height="12" viewBox="0 0 12 12"><rect x="1" y="0.5" width="3" height="10.5" fill="#3477b8"/><rect x="4.8" y="1" width="4.5" height="4" fill="#3f86c8"/><rect x="4.8" y="6.3" width="6.5" height="4.2" fill="#3f86c8"/></svg>
<svg class="abs" style="left:742px;top:418.0px" width="6" height="8" viewBox="0 0 6 8"><path d="M1.2 1 L4.8 4 L1.2 7Z" fill="#6a6a6a"/></svg>
<svg class="abs" style="left:751px;top:416.0px" width="12" height="12" viewBox="0 0 12 12"><path d="M1.5 10.5 L5 2.5 L10.5 10.5Z" fill="none" stroke="#444" stroke-width="0.9"/><path d="M6 3 L9.5 3 L8 6" fill="none" stroke="#222" stroke-width="1.3"/></svg>
<div class="abs" style="left:736px;top:310.6px;width:140px;height:1px;background:#e3e3e3"></div>
<div class="abs" style="left:736px;top:330.5px;width:140px;height:1px;background:#e3e3e3"></div>
<div class="abs" style="left:736px;top:391.6px;width:140px;height:1px;background:#e3e3e3"></div>
<div class="abs" style="left:736px;top:411.8px;width:140px;height:1px;background:#e3e3e3"></div>
<div class="abs" style="left:308.6px;top:527.4px;width:34.4px;height:11.2px;background:#e8e8e8;border-left:1px solid #c4c4c4;border-top:1px solid #cdcdcd"></div>
<div class="abs" style="left:343.0px;top:527.4px;width:31.0px;height:11.2px;background:#d5d5d5;border-left:1px solid #ececec;border-top:1px solid #cdcdcd"></div>
<div class="abs" style="left:374.0px;top:527.4px;width:40.0px;height:11.2px;background:#d5d5d5;border-left:1px solid #ececec;border-top:1px solid #cdcdcd"></div>
<div class="abs" style="left:414.0px;top:527.4px;width:34.0px;height:11.2px;background:#d5d5d5;border-left:1px solid #ececec;border-top:1px solid #cdcdcd"></div>
<div class="abs" style="left:448.0px;top:527.4px;width:35.0px;height:11.2px;background:#d5d5d5;border-left:1px solid #ececec;border-top:1px solid #cdcdcd"></div>
<div class="abs" style="left:483.0px;top:527.4px;width:36.0px;height:11.2px;background:#e8e8e8;border-left:1px solid #c4c4c4;border-top:1px solid #cdcdcd"></div>
<div class="abs" style="left:519.0px;top:527.4px;width:61.0px;height:11.2px;background:#d5d5d5;border-left:1px solid #ececec;border-top:1px solid #cdcdcd"></div>
<div class="abs" style="left:580.0px;top:527.4px;width:23.0px;height:11.2px;background:#d5d5d5;border-left:1px solid #ececec;border-top:1px solid #cdcdcd"></div>
<div class="abs" style="left:603.0px;top:527.4px;width:34.0px;height:11.2px;background:#d5d5d5;border-left:1px solid #ececec;border-top:1px solid #cdcdcd"></div>
<div class="abs" style="left:637.0px;top:527.4px;width:43.0px;height:11.2px;background:#d5d5d5;border-left:1px solid #ececec;border-top:1px solid #cdcdcd"></div>
<div class="abs" style="left:680.0px;top:527.4px;width:22.6px;height:11.2px;background:#d5d5d5;border-left:1px solid #ececec;border-top:1px solid #cdcdcd"></div>
<svg class="abs" style="left:309px;top:527.4px" width="4" height="4" viewBox="0 0 4 4"><path d="M0 0 L3.5 0 L0 3.5Z" fill="#35739e"/></svg>
<div class="abs" style="left:152.4px;top:538.4px;width:696.6px;height:30px;background:#dadada;border:1px solid #c8c8c8;border-radius:2px 2px 0 0"></div>
<svg class="abs" style="left:154px;top:541px" width="7" height="5" viewBox="0 0 7 5"><path d="M1 1 L3.5 3.5 L6 1" fill="none" stroke="#777" stroke-width="1"/></svg>
<div class="abs" style="left:162.6px;top:541px;width:1px;height:22px;background:#c6c6c6"></div>
<div class="abs" style="left:270.4px;top:541px;width:1px;height:22px;background:#c6c6c6"></div>
<div class="abs" style="left:294.4px;top:541px;width:1px;height:22px;background:#c6c6c6"></div>
<div class="abs" style="left:318.4px;top:541px;width:1px;height:22px;background:#c6c6c6"></div>
<div class="abs" style="left:364.6px;top:541px;width:1px;height:22px;background:#c6c6c6"></div>
<div class="abs" style="left:389.8px;top:541px;width:1px;height:22px;background:#c6c6c6"></div>
<div class="abs" style="left:563.6px;top:541px;width:1px;height:22px;background:#c6c6c6"></div>
<div class="abs" style="left:650.4px;top:541px;width:1px;height:22px;background:#c6c6c6"></div>
<div class="abs" style="left:694.8px;top:541px;width:1px;height:22px;background:#c6c6c6"></div>
<div class="abs" style="left:741.6px;top:541px;width:1px;height:22px;background:#c6c6c6"></div>
<div class="abs" style="left:392.4px;top:541.6px;width:18px;height:18px;background:#c6cfd9;border:1px solid #9faab6;border-radius:2px"></div>
<div class="abs" style="left:628.8px;top:541.6px;width:18px;height:18px;background:#c6cfd9;border:1px solid #9faab6;border-radius:2px"></div>
<svg class="abs" style="left:167.4px;top:543px" width="16" height="16" viewBox="0 0 16 16"><path d="M2 5 L6.5 2.5 L11 5 L11 8.5 L14.5 10.5 L14.5 13.5 L8 16 L2 13Z" fill="#e2e2e2" stroke="#555" stroke-width="0.9"/><path d="M2 5 L6.5 7.5 L11 5 M6.5 7.5 L6.5 11 L8 12 L14.5 10.5 M8 12 L8 16" fill="none" stroke="#666" stroke-width="0.7"/><rect x="0.5" y="1.5" width="4" height="4" fill="#2f5f86"/><path d="M13 15 L16 15 L16 12Z" fill="#111"/></svg>
<svg class="abs" style="left:188.4px;top:543px" width="16" height="16" viewBox="0 0 16 16"><path d="M1.5 5.5 L6 3 L10.5 5.5 L10.5 9 L14 11 L14 14 L7.5 16 L1.5 13.5Z" fill="#e2e2e2" stroke="#555" stroke-width="0.9"/><path d="M1.5 5.5 L6 8 L10.5 5.5 M6 8 L6 11.5 L7.5 12.5 L14 11 M7.5 12.5 L7.5 16" fill="none" stroke="#666" stroke-width="0.7"/><path d="M10 1 L14.5 1 L14.5 8 M11 4 L14 4" fill="none" stroke="#444" stroke-width="1.5"/></svg>
<svg class="abs" style="left:208.8px;top:543px" width="16" height="16" viewBox="0 0 16 16"><rect x="1" y="1" width="14" height="14" rx="1" fill="#4f6f88"/><rect x="3.5" y="2" width="9" height="5" fill="#c9d3dc"/><rect x="4.5" y="10" width="7" height="5" fill="#2e4a60"/></svg>
<svg class="abs" style="left:229.2px;top:543px" width="16" height="16" viewBox="0 0 16 16"><rect x="1" y="1" width="14" height="14" rx="1" fill="#4f6f88"/><rect x="3.5" y="2" width="9" height="5" fill="#c9d3dc"/><rect x="4.5" y="10" width="7" height="5" fill="#2e4a60"/><path d="M7 6 L14 13" stroke="#222" stroke-width="2"/><path d="M13 15 L16 15 L16 12Z" fill="#111"/></svg>
<svg class="abs" style="left:250.2px;top:543px" width="16" height="16" viewBox="0 0 16 16"><circle cx="8" cy="8" r="5.5" fill="none" stroke="#3a6f92" stroke-width="3" stroke-dasharray="7 2"/><circle cx="8" cy="8" r="2.5" fill="#e8e8e8"/><path d="M13 15 L16 15 L16 12Z" fill="#111"/></svg>
<svg class="abs" style="left:274.6px;top:543px" width="16" height="16" viewBox="0 0 16 16"><rect x="7" y="1" width="8" height="6" fill="#e8e8e8" stroke="#444" stroke-width="0.8"/><rect x="8" y="2.5" width="6" height="1.5" fill="#444"/><rect x="1" y="8" width="8" height="6" fill="#4d6c7d" stroke="#333" stroke-width="0.8"/><rect x="2" y="9.5" width="6" height="2" fill="#d9e2e8"/><path d="M2 7 Q2 3 6 3" fill="none" stroke="#222" stroke-width="1.2"/><path d="M14 9 Q14 13 10 13" fill="none" stroke="#222" stroke-width="1.2"/></svg>
<svg class="abs" style="left:299.2px;top:543px" width="16" height="16" viewBox="0 0 16 16"><circle cx="7.5" cy="8" r="5.6" fill="none" stroke="#6d6d6d" stroke-width="2.6" stroke-dasharray="2 1.5"/><circle cx="7.5" cy="8" r="4.3" fill="#e3e3e3" stroke="#6d6d6d" stroke-width="0.9"/><circle cx="7.5" cy="8" r="1.9" fill="#d8d8d8" stroke="#6d6d6d" stroke-width="0.9"/><path d="M13 15 L16 15 L16 12Z" fill="#111"/></svg>
<svg class="abs" style="left:323.8px;top:543px" width="16" height="16" viewBox="0 0 16 16"><path d="M3 6 Q8 2 12 6 Q14 10 10 13" fill="none" stroke="#3f7fae" stroke-width="3"/><path d="M0.5 3 L6 3 L3 8Z" fill="#3f7fae"/></svg>
<svg class="abs" style="left:344.8px;top:543px" width="16" height="16" viewBox="0 0 16 16"><path d="M13 6 Q8 2 4 6 Q2 10 6 13" fill="none" stroke="#a9b4bc" stroke-width="3"/><path d="M15.5 3 L10 3 L13 8Z" fill="#a9b4bc"/></svg>
<svg class="abs" style="left:368.8px;top:543px" width="16" height="16" viewBox="0 0 16 16"><circle cx="8" cy="8" r="6.8" fill="#ececec" stroke="#555" stroke-width="1"/><path d="M5.6 6 Q5.6 3.6 8 3.6 Q10.4 3.6 10.4 5.8 Q10.4 7.2 8.3 8.2 L8.1 10" fill="none" stroke="#222" stroke-width="1.5"/><circle cx="8.1" cy="12" r="0.9" fill="#222"/><path d="M13 15 L16 15 L16 12Z" fill="#111"/></svg>
<svg class="abs" style="left:395.0px;top:543px" width="16" height="16" viewBox="0 0 16 16"><g transform="rotate(50 8 8)"><rect x="0" y="5.2" width="9" height="5.6" rx="2.8" fill="none" stroke="#1f1f1f" stroke-width="1.5"/><rect x="7" y="5.2" width="9" height="5.6" rx="2.8" fill="none" stroke="#1f1f1f" stroke-width="1.5"/></g><path d="M7.5 4.5 L9.5 7 L14.5 1.5" fill="none" stroke="#5cb33e" stroke-width="1.8"/></svg>
<svg class="abs" style="left:415.6px;top:543px" width="16" height="16" viewBox="0 0 16 16"><path d="M1.5 4.5 L5.5 2.5 L10 4.5 L10 8 L13 9.5 L13 12.5 L7 15 L1.5 12.5Z" fill="#e4e4e4" stroke="#5a5a5a" stroke-width="0.9"/><path d="M1.5 4.5 L6 6.5 L10 4.5 M6 6.5 L6 10 L13 9.5 M6 10 L6 15" fill="none" stroke="#6a6a6a" stroke-width="0.7"/><path d="M8.5 9.5 L15.5 9.5 L15.5 15.5 L8.5 15.5Z" fill="#3f7fae"/><path d="M8.5 9.5 L15.5 9.5" stroke="#9cc3e0" stroke-width="1"/><rect x="0.5" y="1" width="3.5" height="3.5" fill="#2f5f86"/></svg>
<svg class="abs" style="left:435.4px;top:543px" width="16" height="16" viewBox="0 0 16 16"><path d="M1.5 4.5 L5.5 2.5 L10 4.5 L10 8 L13 9.5 L13 12.5 L7 15 L1.5 12.5Z" fill="#e4e4e4" stroke="#5a5a5a" stroke-width="0.9"/><path d="M1.5 4.5 L6 6.5 L10 4.5 M6 6.5 L6 10 L13 9.5 M6 10 L6 15" fill="none" stroke="#6a6a6a" stroke-width="0.7"/><path d="M8.5 9.5 L15.5 9.5 L15.5 15.5 L8.5 15.5Z" fill="#3f7fae"/><path d="M8.5 9.5 L15.5 9.5" stroke="#9cc3e0" stroke-width="1"/></svg>
<svg class="abs" style="left:457.0px;top:543px" width="16" height="16" viewBox="0 0 16 16"><rect x="1" y="1" width="2" height="14" fill="#777"/><circle cx="6.5" cy="4" r="2.3" fill="#3f7fae"/><circle cx="6.5" cy="8.5" r="2.3" fill="#3f7fae"/><rect x="4" y="11" width="4" height="4" fill="#e8e8e8" stroke="#555" stroke-width="0.7"/><path d="M13 9 L13 14 L10 14" fill="none" stroke="#111" stroke-width="1.5"/></svg>
<svg class="abs" style="left:477.4px;top:543px" width="16" height="16" viewBox="0 0 16 16"><path d="M1 1 L4.5 4.5 M1 1 L1 4 M1 1 L4 1" stroke="#222" stroke-width="1.3"/><circle cx="12" cy="4.5" r="3.8" fill="#3f7fae"/><circle cx="5" cy="11" r="3.5" fill="#e3e3e3" stroke="#777" stroke-width="0.8"/><path d="M15 11 L11 15 M11 15 L14 15 M11 15 L11 12" stroke="#111" stroke-width="1.3"/></svg>
<svg class="abs" style="left:501.2px;top:543px" width="16" height="16" viewBox="0 0 16 16"><rect x="1" y="1" width="3.8" height="5" rx="0.8" fill="#e8e8e8" stroke="#777" stroke-width="0.8"/><rect x="6.1" y="1" width="3.8" height="5" rx="0.8" fill="#e8e8e8" stroke="#777" stroke-width="0.8"/><rect x="11.2" y="1" width="3.8" height="5" rx="0.8" fill="#e8e8e8" stroke="#777" stroke-width="0.8"/><rect x="1" y="8.5" width="3.8" height="5.5" rx="0.8" fill="#3f7fae"/><rect x="6.1" y="8.5" width="3.8" height="5.5" rx="0.8" fill="#e8e8e8" stroke="#777" stroke-width="0.8"/><rect x="11.2" y="8.5" width="3.8" height="5.5" rx="0.8" fill="#e8e8e8" stroke="#777" stroke-width="0.8"/><path d="M13 15 L16 15 L16 12Z" fill="#111"/></svg>
<svg class="abs" style="left:522.2px;top:543px" width="16" height="16" viewBox="0 0 16 16"><path d="M1 14 L6 2 L8 14Z" fill="#3f7fae"/><path d="M6 2 L14 8 L15 14 L8 14Z" fill="#e8e8e8" stroke="#777" stroke-width="0.8"/></svg>
<svg class="abs" style="left:543.2px;top:543px" width="16" height="16" viewBox="0 0 16 16"><rect x="1" y="2" width="5" height="6" rx="2" fill="#e8e8e8" stroke="#777" stroke-width="0.8"/><circle cx="8" cy="10.5" r="4" fill="#2f5f86"/><path d="M12 3 L12 11" stroke="#777" stroke-width="1.3"/></svg>
<svg class="abs" style="left:567.8px;top:543px" width="16" height="16" viewBox="0 0 16 16"><path d="M3 13 L11 3 Q13 1 14.5 3 Q15.5 5 13.5 7 L7 14" fill="none" stroke="#333" stroke-width="1.3"/><path d="M5 11 L11 4" fill="none" stroke="#333" stroke-width="1.1"/><circle cx="10" cy="11" r="3.8" fill="#3f7fae"/></svg>
<svg class="abs" style="left:589.4px;top:543px" width="16" height="16" viewBox="0 0 16 16"><path d="M2 13 Q0.5 11 2 9.5 L10 2 Q12.5 0 14.5 2 Q16 4.5 13.5 6.5 L6 14 Q4 15 2 13Z" fill="none" stroke="#333" stroke-width="1.3"/><path d="M4 12 L12 4" stroke="#333" stroke-width="1.1"/></svg>
<svg class="abs" style="left:609.2px;top:543px" width="16" height="16" viewBox="0 0 16 16"><circle cx="5" cy="10" r="4.5" fill="#2f5f86"/><path d="M7 1 L7 9 M10 3 L10 15 L14 15 L14 5" fill="none" stroke="#777" stroke-width="1.3"/></svg>
<svg class="abs" style="left:631.0px;top:543px" width="16" height="16" viewBox="0 0 16 16"><circle cx="6" cy="9.5" r="4.6" fill="#2d6494" stroke="#2d6494" stroke-width="2.4" stroke-dasharray="1.6 1.1"/><circle cx="6" cy="9.5" r="1.6" fill="#c6cfd9"/><circle cx="11.5" cy="4.8" r="2.8" fill="#9a86a0" stroke="#7f6c88" stroke-width="1.8" stroke-dasharray="1.2 0.9"/><circle cx="11.5" cy="4.8" r="1" fill="#c6cfd9"/><path d="M13 15 L16 15 L16 12Z" fill="#111"/></svg>
<svg class="abs" style="left:654.6px;top:543px" width="16" height="16" viewBox="0 0 16 16"><path d="M2 2 L6 2 L6 6 L9 6 L9 3 L12 3 L12 14 L2 14Z" fill="#dedede" stroke="#666" stroke-width="0.9"/><path d="M3 8 L8 8 M3 10.5 L8 10.5 M9.5 8 L13 8 M9.5 11 L14 11" stroke="#444" stroke-width="1"/><path d="M4 5 L5 1 M7 13 L10 9" stroke="#333" stroke-width="1.1"/><path d="M13 15 L16 15 L16 12Z" fill="#111"/></svg>
<svg class="abs" style="left:675.6px;top:543px" width="16" height="16" viewBox="0 0 16 16"><circle cx="11" cy="5" r="4.2" fill="#ececec" stroke="#555" stroke-width="1"/><rect x="10.4" y="3.6" width="1.3" height="3.6" fill="#222"/><circle cx="11" cy="2.5" r="0.7" fill="#222"/><rect x="1" y="5" width="5" height="2.2" fill="#ececec" stroke="#555" stroke-width="0.8"/><rect x="3" y="9" width="6" height="2.2" fill="#ececec" stroke="#555" stroke-width="0.8"/><rect x="3" y="12.5" width="7" height="2.2" fill="#ececec" stroke="#555" stroke-width="0.8"/><path d="M2 7.2 L2 13.6 L3 13.6 M2 10 L3 10" fill="none" stroke="#555" stroke-width="0.8"/></svg>
<svg class="abs" style="left:699.6px;top:543px" width="16" height="16" viewBox="0 0 16 16"><path d="M3 7 L9 4 L15 7 L15 13 L9 16 L3 13Z" fill="#e6e6e6" stroke="#666" stroke-width="0.8"/><path d="M4 7 L9 5 L14 7 L14 10 L9 12 L4 10Z" fill="#3f7fae"/><path d="M0.5 9 L6 2 L8 2" fill="none" stroke="#111" stroke-width="1.6"/></svg>
<svg class="abs" style="left:720.6px;top:543px" width="16" height="16" viewBox="0 0 16 16"><rect x="1" y="3" width="9" height="8" fill="#e8e8e8" stroke="#555" stroke-width="1"/><path d="M3 7 L8 7 M6 5 L8 7 L6 9" fill="none" stroke="#111" stroke-width="1.2"/><rect x="9" y="6" width="6" height="7" fill="#3f7fae"/></svg>
<svg class="abs" style="left:745.8px;top:543px" width="16" height="16" viewBox="0 0 16 16"><rect x="2" y="2" width="12" height="12" fill="#e8f0f4" stroke="#4d6a78" stroke-width="2"/><circle cx="2" cy="2" r="1.5" fill="#777"/><circle cx="14" cy="2" r="1.5" fill="#777"/><circle cx="2" cy="14" r="1.5" fill="#777"/><circle cx="14" cy="14" r="1.5" fill="#777"/><path d="M13 15 L16 15 L16 12Z" fill="#111"/></svg>
<svg class="abs" style="left:766.2px;top:543px" width="16" height="16" viewBox="0 0 16 16"><path d="M3 13 L3 9 Q3 6 6 4 L12 2 Q14 2 14 4 L6 10 L12 9 Q14.5 9 14 12 Q13 14.5 10 14.5 L5 14.5 Q3 14.5 3 13Z" fill="#d9d9d9" stroke="#3a3a3a" stroke-width="1.1"/><circle cx="9" cy="5.5" r="1" fill="#111"/></svg>
<svg class="abs" style="left:787.2px;top:543px" width="16" height="16" viewBox="0 0 16 16"><circle cx="5" cy="8" r="4" fill="#6da8c8" stroke="#3a7aa0" stroke-width="1"/><rect x="10" y="1" width="5" height="6" fill="#2f70ad"/><path d="M2 13 L8 15 L15 11" fill="none" stroke="#666" stroke-width="1.2"/></svg>
<svg class="abs" style="left:808.8px;top:543px" width="16" height="16" viewBox="0 0 16 16"><path d="M2 15 L2 11 L6 11 L6 15Z" fill="#8a8a8a"/><path d="M4 11 L4 6 L8 2.5 L13 6 L13 10" fill="none" stroke="#777" stroke-width="2"/><path d="M11 10 L15 10 L15 13" fill="none" stroke="#777" stroke-width="1.3"/><circle cx="8" cy="3" r="1.5" fill="#999"/><circle cx="4" cy="7" r="1" fill="#444"/></svg>
<svg class="abs" style="left:829.2px;top:543px" width="16" height="16" viewBox="0 0 16 16"><rect x="2" y="2" width="12" height="12" fill="#e8f0f4" stroke="#4d6a78" stroke-width="2"/><circle cx="2" cy="2" r="1.5" fill="#777"/><circle cx="14" cy="2" r="1.5" fill="#777"/><circle cx="2" cy="14" r="1.5" fill="#777"/><circle cx="14" cy="14" r="1.5" fill="#777"/><circle cx="6" cy="10" r="3.5" fill="#6da8c8"/></svg><div class="t" style="left:69.80px;top:20.64px;font-size:8.7px;font-weight:bold;color:#e6edf5;font-family:'Liberation Sans';transform:scaleX(0.8551);transform-origin:0 0;">3D</div>
<div class="t" style="left:79.50px;top:20.64px;font-size:8.7px;font-weight:normal;color:#b9cbe0;font-family:'Liberation Sans';transform:scaleX(0.8623);transform-origin:0 0;">EXPERIENCE</div>
<div class="t" style="left:130.60px;top:20.56px;font-size:9.5px;font-weight:normal;color:#c8d6e6;font-family:'Liberation Sans';">|</div>
<div class="t" style="left:135.10px;top:20.54px;font-size:8.7px;font-weight:bold;color:#cfdbe9;font-family:'Liberation Sans';transform:scaleX(0.8520);transform-origin:0 0;">SOLIDWORKS</div>
<div class="t" style="left:191.00px;top:20.54px;font-size:8.7px;font-weight:normal;color:#c8d6e6;font-family:'Liberation Sans';transform:scaleX(0.9047);transform-origin:0 0;">xDesign</div>
<div class="t" style="left:399.70px;top:21.42px;font-size:7.3px;font-weight:normal;color:#b5b5b5;font-family:'Liberation Sans';transform:scaleX(0.9946);transform-origin:0 0;">Search</div>
<div class="t" style="left:821.00px;top:20.70px;font-size:9.8px;font-weight:normal;color:#c3d3e6;font-family:'Liberation Sans';transform:scaleX(0.9258);transform-origin:0 0;">Ed ENGINEER</div>
<div class="t" style="left:521.00px;top:76.14px;font-size:7.4px;font-weight:normal;color:#7c7c7c;font-family:'Liberation Sans';transform:scaleX(0.8609);transform-origin:0 0;">Select the first circl...</div>
<div class="t" style="left:511.90px;top:76.95px;font-size:6.2px;font-weight:bold;color:#5a4a00;font-family:'Liberation Sans';">0</div>
<div class="t" style="left:939.00px;top:136.57px;font-size:7px;font-weight:normal;color:#555;font-family:'Liberation Sans';transform:scaleX(0.8568);transform-origin:0 0;">mm</div>
<div class="t" style="left:738.00px;top:159.37px;font-size:7px;font-weight:normal;color:#505050;font-family:'Liberation Sans';transform:scaleX(0.9598);transform-origin:0 0;">Gear Joint</div>
<div class="t" style="left:738.00px;top:176.37px;font-size:7px;font-weight:normal;color:#4a4a4a;font-family:'Liberation Sans';transform:scaleX(0.8995);transform-origin:0 0;">Rotary components</div>
<div class="t" style="left:799.30px;top:177.00px;font-size:6.5px;font-weight:bold;color:#eeeeee;font-family:'Liberation Sans';">?</div>
<div class="t" style="left:747.00px;top:192.61px;font-size:7.2px;font-weight:normal;color:#9a9a9a;font-family:'Liberation Sans';transform:scaleX(0.8738);transform-origin:0 0;">PM009521_HG_20114 (PM009521</div>
<div class="t" style="left:747.00px;top:204.71px;font-size:7.2px;font-weight:normal;color:#9a9a9a;font-family:'Liberation Sans';transform:scaleX(0.8861);transform-origin:0 0;">PM009535_HG_2048_AN</div>
<div class="t" style="left:750.70px;top:223.07px;font-size:7px;font-weight:bold;color:#333;font-family:'Liberation Sans';transform:scaleX(0.8603);transform-origin:0 0;">Ratio inputs</div>
<div class="t" style="left:738.00px;top:239.37px;font-size:7px;font-weight:normal;color:#4a4a4a;font-family:'Liberation Sans';transform:scaleX(0.8949);transform-origin:0 0;">Ratio (R1:R2)</div>
<div class="t" style="left:798.00px;top:239.57px;font-size:7px;font-weight:normal;color:#444;font-family:'Liberation Sans';">1</div>
<div class="t" style="left:750.00px;top:255.97px;font-size:7px;font-weight:normal;color:#5a5a5a;font-family:'Liberation Sans';transform:scaleX(0.8891);transform-origin:0 0;">Reverse drive</div>
<div class="t" style="left:738.60px;top:276.37px;font-size:7px;font-weight:bold;color:#333;font-family:'Liberation Sans';transform:scaleX(0.8489);transform-origin:0 0;">R1</div>
<div class="t" style="left:751.00px;top:276.87px;font-size:7px;font-weight:normal;color:#606060;font-family:'Liberation Sans';transform:scaleX(0.8948);transform-origin:0 0;">Revolute.2 - PM009521-PM0...</div>
<div class="t" style="left:859.50px;top:277.50px;font-size:6.5px;font-weight:bold;color:#d5e4f3;font-family:'Liberation Sans';transform:scaleX(1.0272);transform-origin:0 0;">3 / 3</div>
<div class="t" style="left:738.60px;top:357.57px;font-size:7px;font-weight:bold;color:#333;font-family:'Liberation Sans';transform:scaleX(0.8489);transform-origin:0 0;">R2</div>
<div class="t" style="left:751.00px;top:358.07px;font-size:7px;font-weight:normal;color:#606060;font-family:'Liberation Sans';transform:scaleX(0.8948);transform-origin:0 0;">Revolute.1 - PM009521-PM0...</div>
<div class="t" style="left:859.50px;top:358.70px;font-size:6.5px;font-weight:bold;color:#d5e4f3;font-family:'Liberation Sans';transform:scaleX(1.0272);transform-origin:0 0;">3 / 3</div>
<div class="t" style="left:765.00px;top:296.37px;font-size:7px;font-weight:bold;color:#2e2e2e;font-family:'Liberation Sans';transform:scaleX(0.8738);transform-origin:0 0;">Concentric&lt;2&gt;</div>
<div class="t" style="left:765.00px;top:316.67px;font-size:7px;font-weight:bold;color:#2e2e2e;font-family:'Liberation Sans';transform:scaleX(0.8397);transform-origin:0 0;">Coincident&lt;2&gt;</div>
<div class="t" style="left:765.00px;top:336.97px;font-size:7px;font-weight:bold;color:#2e2e2e;font-family:'Liberation Sans';transform:scaleX(0.8567);transform-origin:0 0;">Angle&lt;2&gt;</div>
<div class="t" style="left:765.00px;top:377.77px;font-size:7px;font-weight:bold;color:#2e2e2e;font-family:'Liberation Sans';transform:scaleX(0.8738);transform-origin:0 0;">Concentric&lt;1&gt;</div>
<div class="t" style="left:765.00px;top:398.07px;font-size:7px;font-weight:bold;color:#2e2e2e;font-family:'Liberation Sans';transform:scaleX(0.8397);transform-origin:0 0;">Coincident&lt;1&gt;</div>
<div class="t" style="left:765.00px;top:418.37px;font-size:7px;font-weight:bold;color:#2e2e2e;font-family:'Liberation Sans';transform:scaleX(0.8567);transform-origin:0 0;">Angle&lt;1&gt;</div>
<div class="t" style="left:313.50px;top:530.11px;font-size:7.2px;font-weight:normal;color:#4a4a4a;font-family:'Liberation Sans';transform:scaleX(0.9255);transform-origin:0 0;">Standard</div>
<div class="t" style="left:348.40px;top:530.11px;font-size:7.2px;font-weight:normal;color:#4a4a4a;font-family:'Liberation Sans';transform:scaleX(0.9325);transform-origin:0 0;">Sketch</div>
<div class="t" style="left:376.60px;top:530.11px;font-size:7.2px;font-weight:normal;color:#4a4a4a;font-family:'Liberation Sans';transform:scaleX(0.9085);transform-origin:0 0;">Subdivision</div>
<div class="t" style="left:419.00px;top:530.11px;font-size:7.2px;font-weight:normal;color:#4a4a4a;font-family:'Liberation Sans';transform:scaleX(0.8811);transform-origin:0 0;">Features</div>
<div class="t" style="left:453.00px;top:530.11px;font-size:7.2px;font-weight:normal;color:#4a4a4a;font-family:'Liberation Sans';transform:scaleX(0.8987);transform-origin:0 0;">Surfaces</div>
<div class="t" style="left:487.40px;top:530.11px;font-size:7.2px;font-weight:normal;color:#4a4a4a;font-family:'Liberation Sans';transform:scaleX(0.8987);transform-origin:0 0;">Assembly</div>
<div class="t" style="left:524.50px;top:530.11px;font-size:7.2px;font-weight:normal;color:#4a4a4a;font-family:'Liberation Sans';transform:scaleX(0.9068);transform-origin:0 0;">Design Guidance</div>
<div class="t" style="left:584.00px;top:530.11px;font-size:7.2px;font-weight:normal;color:#4a4a4a;font-family:'Liberation Sans';transform:scaleX(0.8343);transform-origin:0 0;">Tools</div>
<div class="t" style="left:608.00px;top:530.11px;font-size:7.2px;font-weight:normal;color:#4a4a4a;font-family:'Liberation Sans';transform:scaleX(0.8760);transform-origin:0 0;">Lifecycle</div>
<div class="t" style="left:641.00px;top:530.11px;font-size:7.2px;font-weight:normal;color:#4a4a4a;font-family:'Liberation Sans';transform:scaleX(0.8862);transform-origin:0 0;">Marketplace</div>
<div class="t" style="left:684.60px;top:530.11px;font-size:7.2px;font-weight:normal;color:#4a4a4a;font-family:'Liberation Sans';transform:scaleX(0.8736);transform-origin:0 0;">View</div></div></body></html>
